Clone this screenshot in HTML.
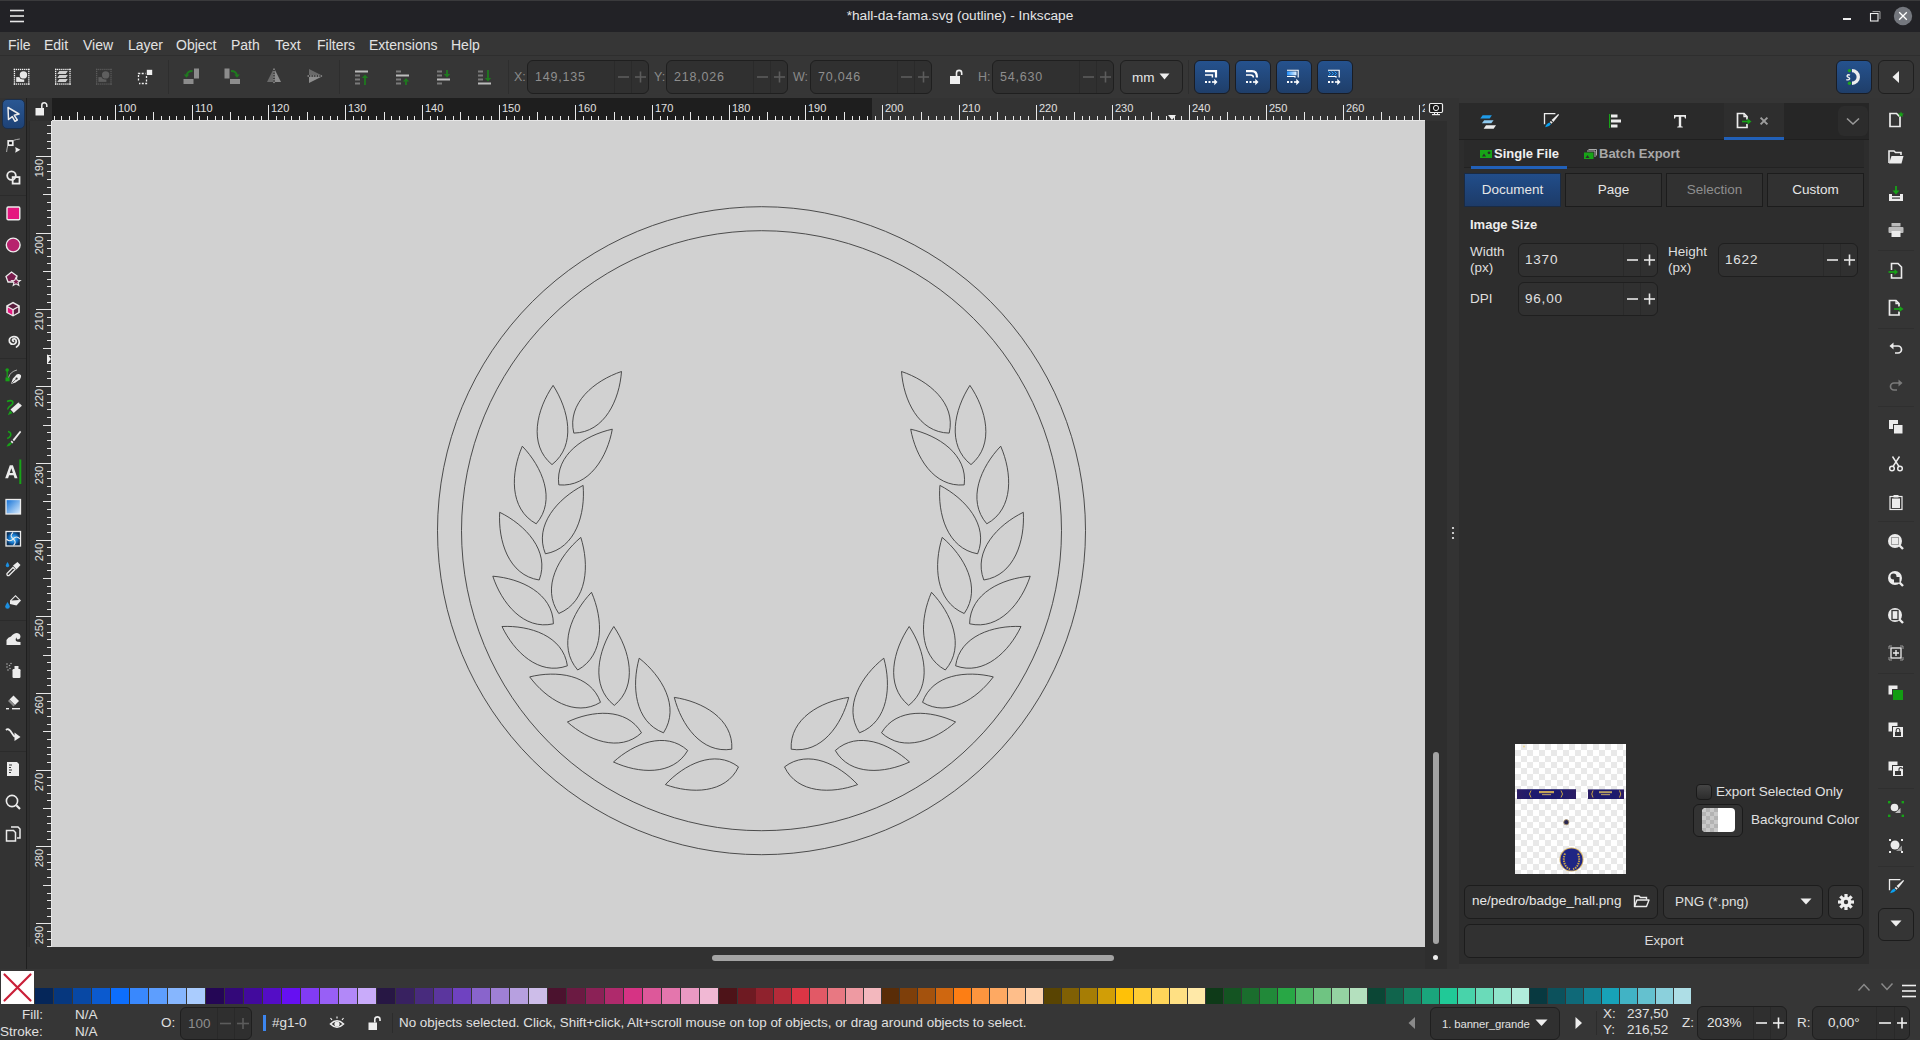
<!DOCTYPE html>
<html><head><meta charset="utf-8">
<style>
*{box-sizing:border-box;margin:0;padding:0}
html,body{width:1920px;height:1040px;overflow:hidden;background:#353535;font-family:"Liberation Sans",sans-serif;color:#dedede}
.a{position:absolute}
.t{white-space:nowrap}
svg{overflow:visible}
</style></head><body>
<div class="a" style="left:0;top:0;width:1920px;height:1px;background:#3a3a3c"></div>
<div class="a" style="left:0;top:1px;width:1920px;height:31px;background:#222226"></div>
<svg class="a" style="left:8px;top:8px" width="18" height="16"><g stroke="#e8e8e8" stroke-width="1.6"><line x1="2" y1="2.5" x2="16" y2="2.5"/><line x1="2" y1="8" x2="16" y2="8"/><line x1="2" y1="13.5" x2="16" y2="13.5"/></g></svg>
<div class="a t" style="left:760px;top:8px;width:400px;text-align:center;font-size:13.7px;color:#e6e6e6;line-height:16px">*hall-da-fama.svg (outline) - Inkscape</div>
<div class="a" style="left:1843px;top:18px;width:8px;height:1.5px;background:#eee"></div>
<svg class="a" style="left:1866px;top:8px" width="18" height="16"><rect x="4.5" y="5.5" width="7.5" height="7.5" fill="none" stroke="#eee" stroke-width="1.1"/><path d="M6.5 3.5 H14 V11" fill="none" stroke="#aaa" stroke-width="0.9"/></svg>
<svg class="a" style="left:1892px;top:5px" width="22" height="22"><circle cx="11" cy="11" r="9.2" fill="#74777e"/><path d="M7.2 7.2 L14.8 14.8 M14.8 7.2 L7.2 14.8" stroke="#fff" stroke-width="1.3"/></svg>
<div class="a" style="left:0;top:32px;width:1920px;height:23px;background:#363636"></div>
<div class="a t" style="left:8px;top:37px;font-size:14px;line-height:16px;color:#e2e2e2">File</div>
<div class="a t" style="left:44px;top:37px;font-size:14px;line-height:16px;color:#e2e2e2">Edit</div>
<div class="a t" style="left:83px;top:37px;font-size:14px;line-height:16px;color:#e2e2e2">View</div>
<div class="a t" style="left:128px;top:37px;font-size:14px;line-height:16px;color:#e2e2e2">Layer</div>
<div class="a t" style="left:176px;top:37px;font-size:14px;line-height:16px;color:#e2e2e2">Object</div>
<div class="a t" style="left:231px;top:37px;font-size:14px;line-height:16px;color:#e2e2e2">Path</div>
<div class="a t" style="left:275px;top:37px;font-size:14px;line-height:16px;color:#e2e2e2">Text</div>
<div class="a t" style="left:317px;top:37px;font-size:14px;line-height:16px;color:#e2e2e2">Filters</div>
<div class="a t" style="left:369px;top:37px;font-size:14px;line-height:16px;color:#e2e2e2">Extensions</div>
<div class="a t" style="left:451px;top:37px;font-size:14px;line-height:16px;color:#e2e2e2">Help</div>
<div class="a" style="left:0;top:55px;width:1920px;height:1px;background:#2e2e2e"></div>
<div class="a" style="left:0;top:56px;width:1920px;height:42px;background:#363636"></div>
<div class="a" style="left:168px;top:60px;width:1px;height:34px;background:#2e2e2e"></div>
<div class="a" style="left:339px;top:60px;width:1px;height:34px;background:#2e2e2e"></div>
<div class="a" style="left:508px;top:60px;width:1px;height:34px;background:#2e2e2e"></div>
<div class="a" style="left:1188px;top:60px;width:1px;height:34px;background:#2e2e2e"></div>
<svg class="a" style="left:0;top:0" width="170" height="95"><rect x="13.80" y="68.8" width="1.3" height="1.3" fill="#f2f2f2"/><rect x="13.80" y="83.39999999999999" width="1.3" height="1.3" fill="#f2f2f2"/><rect x="13.8" y="68.80" width="1.3" height="1.3" fill="#f2f2f2"/><rect x="28.15" y="68.80" width="1.3" height="1.3" fill="#f2f2f2"/><rect x="15.85" y="68.8" width="1.3" height="1.3" fill="#f2f2f2"/><rect x="15.85" y="83.39999999999999" width="1.3" height="1.3" fill="#f2f2f2"/><rect x="13.8" y="70.88" width="1.3" height="1.3" fill="#f2f2f2"/><rect x="28.15" y="70.88" width="1.3" height="1.3" fill="#f2f2f2"/><rect x="17.90" y="68.8" width="1.3" height="1.3" fill="#f2f2f2"/><rect x="17.90" y="83.39999999999999" width="1.3" height="1.3" fill="#f2f2f2"/><rect x="13.8" y="72.96" width="1.3" height="1.3" fill="#f2f2f2"/><rect x="28.15" y="72.96" width="1.3" height="1.3" fill="#f2f2f2"/><rect x="19.95" y="68.8" width="1.3" height="1.3" fill="#f2f2f2"/><rect x="19.95" y="83.39999999999999" width="1.3" height="1.3" fill="#f2f2f2"/><rect x="13.8" y="75.04" width="1.3" height="1.3" fill="#f2f2f2"/><rect x="28.15" y="75.04" width="1.3" height="1.3" fill="#f2f2f2"/><rect x="22.00" y="68.8" width="1.3" height="1.3" fill="#f2f2f2"/><rect x="22.00" y="83.39999999999999" width="1.3" height="1.3" fill="#f2f2f2"/><rect x="13.8" y="77.12" width="1.3" height="1.3" fill="#f2f2f2"/><rect x="28.15" y="77.12" width="1.3" height="1.3" fill="#f2f2f2"/><rect x="24.05" y="68.8" width="1.3" height="1.3" fill="#f2f2f2"/><rect x="24.05" y="83.39999999999999" width="1.3" height="1.3" fill="#f2f2f2"/><rect x="13.8" y="79.20" width="1.3" height="1.3" fill="#f2f2f2"/><rect x="28.15" y="79.20" width="1.3" height="1.3" fill="#f2f2f2"/><rect x="26.10" y="68.8" width="1.3" height="1.3" fill="#f2f2f2"/><rect x="26.10" y="83.39999999999999" width="1.3" height="1.3" fill="#f2f2f2"/><rect x="13.8" y="81.28" width="1.3" height="1.3" fill="#f2f2f2"/><rect x="28.15" y="81.28" width="1.3" height="1.3" fill="#f2f2f2"/><rect x="28.15" y="68.8" width="1.3" height="1.3" fill="#f2f2f2"/><rect x="28.15" y="83.39999999999999" width="1.3" height="1.3" fill="#f2f2f2"/><rect x="13.8" y="83.36" width="1.3" height="1.3" fill="#f2f2f2"/><rect x="28.15" y="83.36" width="1.3" height="1.3" fill="#f2f2f2"/><rect x="16.2" y="77.1" width="8" height="4.8" fill="#e8e8e8"/><circle cx="23.450000000000003" cy="74.9" r="4.7" fill="#363636"/><circle cx="23.450000000000003" cy="74.9" r="3.7" fill="#e8e8e8"/><rect x="55.00" y="68.8" width="1.3" height="1.3" fill="#f2f2f2"/><rect x="55.00" y="83.39999999999999" width="1.3" height="1.3" fill="#f2f2f2"/><rect x="55" y="68.80" width="1.3" height="1.3" fill="#f2f2f2"/><rect x="69.35" y="68.80" width="1.3" height="1.3" fill="#f2f2f2"/><rect x="57.05" y="68.8" width="1.3" height="1.3" fill="#f2f2f2"/><rect x="57.05" y="83.39999999999999" width="1.3" height="1.3" fill="#f2f2f2"/><rect x="55" y="70.88" width="1.3" height="1.3" fill="#f2f2f2"/><rect x="69.35" y="70.88" width="1.3" height="1.3" fill="#f2f2f2"/><rect x="59.10" y="68.8" width="1.3" height="1.3" fill="#f2f2f2"/><rect x="59.10" y="83.39999999999999" width="1.3" height="1.3" fill="#f2f2f2"/><rect x="55" y="72.96" width="1.3" height="1.3" fill="#f2f2f2"/><rect x="69.35" y="72.96" width="1.3" height="1.3" fill="#f2f2f2"/><rect x="61.15" y="68.8" width="1.3" height="1.3" fill="#f2f2f2"/><rect x="61.15" y="83.39999999999999" width="1.3" height="1.3" fill="#f2f2f2"/><rect x="55" y="75.04" width="1.3" height="1.3" fill="#f2f2f2"/><rect x="69.35" y="75.04" width="1.3" height="1.3" fill="#f2f2f2"/><rect x="63.20" y="68.8" width="1.3" height="1.3" fill="#f2f2f2"/><rect x="63.20" y="83.39999999999999" width="1.3" height="1.3" fill="#f2f2f2"/><rect x="55" y="77.12" width="1.3" height="1.3" fill="#f2f2f2"/><rect x="69.35" y="77.12" width="1.3" height="1.3" fill="#f2f2f2"/><rect x="65.25" y="68.8" width="1.3" height="1.3" fill="#f2f2f2"/><rect x="65.25" y="83.39999999999999" width="1.3" height="1.3" fill="#f2f2f2"/><rect x="55" y="79.20" width="1.3" height="1.3" fill="#f2f2f2"/><rect x="69.35" y="79.20" width="1.3" height="1.3" fill="#f2f2f2"/><rect x="67.30" y="68.8" width="1.3" height="1.3" fill="#f2f2f2"/><rect x="67.30" y="83.39999999999999" width="1.3" height="1.3" fill="#f2f2f2"/><rect x="55" y="81.28" width="1.3" height="1.3" fill="#f2f2f2"/><rect x="69.35" y="81.28" width="1.3" height="1.3" fill="#f2f2f2"/><rect x="69.35" y="68.8" width="1.3" height="1.3" fill="#f2f2f2"/><rect x="69.35" y="83.39999999999999" width="1.3" height="1.3" fill="#f2f2f2"/><rect x="55" y="83.36" width="1.3" height="1.3" fill="#f2f2f2"/><rect x="69.35" y="83.36" width="1.3" height="1.3" fill="#f2f2f2"/><path d="M59.3 71 H67.8 L65.8 73.9 H57.3Z M59.3 75 H67.8 L65.8 77.9 H57.3Z M59.3 78.9 H67.8 L65.8 82 H57.3Z" fill="#cfcfcf"/><rect x="96.00" y="68.8" width="1.3" height="1.3" fill="#5a5a5a"/><rect x="96.00" y="83.39999999999999" width="1.3" height="1.3" fill="#5a5a5a"/><rect x="96" y="68.80" width="1.3" height="1.3" fill="#5a5a5a"/><rect x="110.35" y="68.80" width="1.3" height="1.3" fill="#5a5a5a"/><rect x="98.05" y="68.8" width="1.3" height="1.3" fill="#5a5a5a"/><rect x="98.05" y="83.39999999999999" width="1.3" height="1.3" fill="#5a5a5a"/><rect x="96" y="70.88" width="1.3" height="1.3" fill="#5a5a5a"/><rect x="110.35" y="70.88" width="1.3" height="1.3" fill="#5a5a5a"/><rect x="100.10" y="68.8" width="1.3" height="1.3" fill="#5a5a5a"/><rect x="100.10" y="83.39999999999999" width="1.3" height="1.3" fill="#5a5a5a"/><rect x="96" y="72.96" width="1.3" height="1.3" fill="#5a5a5a"/><rect x="110.35" y="72.96" width="1.3" height="1.3" fill="#5a5a5a"/><rect x="102.15" y="68.8" width="1.3" height="1.3" fill="#5a5a5a"/><rect x="102.15" y="83.39999999999999" width="1.3" height="1.3" fill="#5a5a5a"/><rect x="96" y="75.04" width="1.3" height="1.3" fill="#5a5a5a"/><rect x="110.35" y="75.04" width="1.3" height="1.3" fill="#5a5a5a"/><rect x="104.20" y="68.8" width="1.3" height="1.3" fill="#5a5a5a"/><rect x="104.20" y="83.39999999999999" width="1.3" height="1.3" fill="#5a5a5a"/><rect x="96" y="77.12" width="1.3" height="1.3" fill="#5a5a5a"/><rect x="110.35" y="77.12" width="1.3" height="1.3" fill="#5a5a5a"/><rect x="106.25" y="68.8" width="1.3" height="1.3" fill="#5a5a5a"/><rect x="106.25" y="83.39999999999999" width="1.3" height="1.3" fill="#5a5a5a"/><rect x="96" y="79.20" width="1.3" height="1.3" fill="#5a5a5a"/><rect x="110.35" y="79.20" width="1.3" height="1.3" fill="#5a5a5a"/><rect x="108.30" y="68.8" width="1.3" height="1.3" fill="#5a5a5a"/><rect x="108.30" y="83.39999999999999" width="1.3" height="1.3" fill="#5a5a5a"/><rect x="96" y="81.28" width="1.3" height="1.3" fill="#5a5a5a"/><rect x="110.35" y="81.28" width="1.3" height="1.3" fill="#5a5a5a"/><rect x="110.35" y="68.8" width="1.3" height="1.3" fill="#5a5a5a"/><rect x="110.35" y="83.39999999999999" width="1.3" height="1.3" fill="#5a5a5a"/><rect x="96" y="83.36" width="1.3" height="1.3" fill="#5a5a5a"/><rect x="110.35" y="83.36" width="1.3" height="1.3" fill="#5a5a5a"/><rect x="98.4" y="77.1" width="8" height="4.8" fill="#5e5e5e"/><circle cx="105.65" cy="74.9" r="4.7" fill="#363636"/><circle cx="105.65" cy="74.9" r="3.7" fill="#5e5e5e"/><path d="M138.5 80.5 V73.5 H145.5 M146.5 76 V83.5 H139" fill="none" stroke="#f0f0f0" stroke-width="1.3" stroke-dasharray="2 1.4"/><rect x="146.8" y="69.8" width="5.4" height="5.2" fill="#f0f0f0"/></svg>
<svg class="a" style="left:183px;top:68px" width="18" height="17"><rect x="11" y="0.5" width="5" height="10" fill="#8c8c8c"/><rect x="0.5" y="11" width="10" height="5" fill="#8c8c8c"/><path d="M9.5 3 Q4 3 3.5 8" fill="none" stroke="#1e7a1e" stroke-width="1.8"/><path d="M0.8 6.5 L3.5 9.8 L6.3 6.5Z" fill="#1e7a1e"/></svg>
<svg class="a" style="left:224px;top:68px" width="18" height="17"><rect x="0.5" y="0.5" width="5" height="10" fill="#8c8c8c"/><rect x="6" y="11" width="10" height="5" fill="#8c8c8c"/><path d="M7 3 Q12.5 3 13 8" fill="none" stroke="#1e7a1e" stroke-width="1.8"/><path d="M10.2 6.5 L13 9.8 L15.8 6.5Z" fill="#1e7a1e"/></svg>
<svg class="a" style="left:266px;top:68px" width="17" height="17"><path d="M7 2 V14 H1Z" fill="#6a6a6a"/><path d="M9 2 V14 H15Z" fill="#8e8e8e"/><line x1="8" y1="0.5" x2="8" y2="16" stroke="#bdbdbd" stroke-width="1" stroke-dasharray="1.6 1"/></svg>
<svg class="a" style="left:307px;top:68px" width="17" height="17"><path d="M2 7 H14 L2 1Z" fill="#6a6a6a"/><path d="M2 9 H14 L2 15Z" fill="#8e8e8e"/><line x1="0.5" y1="8" x2="16" y2="8" stroke="#bdbdbd" stroke-width="1" stroke-dasharray="1.6 1"/></svg>
<svg class="a" style="left:355px;top:70px" width="14" height="16"><rect x="0" y="0.5" width="13" height="2" fill="#bcbcbc"/><rect x="0" y="4.5" width="5" height="2" fill="#7a7a7a"/><rect x="0" y="8.5" width="5" height="2" fill="#7a7a7a"/><rect x="0" y="12.5" width="5" height="2" fill="#7a7a7a"/><path d="M10 15 V6" stroke="#1e7a1e" stroke-width="1.8"/><path d="M6.8 8 L10 4.5 L13.2 8Z" fill="#1e7a1e"/></svg>
<svg class="a" style="left:396px;top:70px" width="14" height="16"><rect x="0" y="0.5" width="5" height="2" fill="#7a7a7a"/><rect x="0" y="4.5" width="13" height="2" fill="#bcbcbc"/><rect x="0" y="8.5" width="5" height="2" fill="#7a7a7a"/><rect x="0" y="12.5" width="5" height="2" fill="#7a7a7a"/><path d="M10 15 V10" stroke="#1e7a1e" stroke-width="1.8"/><path d="M6.8 11.5 L10 8 L13.2 11.5Z" fill="#1e7a1e"/></svg>
<svg class="a" style="left:437px;top:70px" width="14" height="16"><rect x="0" y="0.5" width="5" height="2" fill="#7a7a7a"/><rect x="0" y="4.5" width="5" height="2" fill="#7a7a7a"/><rect x="0" y="8.5" width="13" height="2" fill="#bcbcbc"/><rect x="0" y="12.5" width="5" height="2" fill="#7a7a7a"/><path d="M10 0 V5" stroke="#1e7a1e" stroke-width="1.8"/><path d="M6.8 4 L10 7.5 L13.2 4Z" fill="#1e7a1e"/></svg>
<svg class="a" style="left:478px;top:70px" width="14" height="16"><rect x="0" y="0.5" width="5" height="2" fill="#7a7a7a"/><rect x="0" y="4.5" width="5" height="2" fill="#7a7a7a"/><rect x="0" y="8.5" width="5" height="2" fill="#7a7a7a"/><rect x="0" y="12.5" width="13" height="2" fill="#bcbcbc"/><path d="M10 0 V9" stroke="#1e7a1e" stroke-width="1.8"/><path d="M6.8 8 L10 11.5 L13.2 8Z" fill="#1e7a1e"/></svg>
<div class="a t" style="left:514px;top:69px;font-size:12.5px;line-height:16px;color:#8a8a8a">X:</div>
<div class="a" style="left:527px;top:60px;width:122px;height:34px;border:1px solid #1f1f1f;border-radius:6px;background:#303030"></div>
<div class="a" style="left:614px;top:61px;width:1px;height:32px;background:#2a2a2a"></div>
<div class="a" style="left:631px;top:61px;width:1px;height:32px;background:#2a2a2a"></div>
<div class="a t" style="left:535px;top:69.0px;font-size:12.5px;line-height:16px;color:#8e8e8e;letter-spacing:0.8px">149,135</div>
<svg class="a" style="left:614px;top:60px" width="35" height="34"><g stroke="#5c5c5c" stroke-width="1.6"><line x1="4" y1="17.0" x2="15" y2="17.0"/><line x1="21" y1="17.0" x2="32" y2="17.0"/><line x1="26.5" y1="11.5" x2="26.5" y2="22.5"/></g></svg>
<div class="a t" style="left:654px;top:69px;font-size:12.5px;line-height:16px;color:#8a8a8a">Y:</div>
<div class="a" style="left:666px;top:60px;width:122px;height:34px;border:1px solid #1f1f1f;border-radius:6px;background:#303030"></div>
<div class="a" style="left:753px;top:61px;width:1px;height:32px;background:#2a2a2a"></div>
<div class="a" style="left:770px;top:61px;width:1px;height:32px;background:#2a2a2a"></div>
<div class="a t" style="left:674px;top:69.0px;font-size:12.5px;line-height:16px;color:#8e8e8e;letter-spacing:0.8px">218,026</div>
<svg class="a" style="left:753px;top:60px" width="35" height="34"><g stroke="#5c5c5c" stroke-width="1.6"><line x1="4" y1="17.0" x2="15" y2="17.0"/><line x1="21" y1="17.0" x2="32" y2="17.0"/><line x1="26.5" y1="11.5" x2="26.5" y2="22.5"/></g></svg>
<div class="a t" style="left:793px;top:69px;font-size:12.5px;line-height:16px;color:#8a8a8a">W:</div>
<div class="a" style="left:810px;top:60px;width:122px;height:34px;border:1px solid #1f1f1f;border-radius:6px;background:#303030"></div>
<div class="a" style="left:897px;top:61px;width:1px;height:32px;background:#2a2a2a"></div>
<div class="a" style="left:914px;top:61px;width:1px;height:32px;background:#2a2a2a"></div>
<div class="a t" style="left:818px;top:69.0px;font-size:12.5px;line-height:16px;color:#8e8e8e;letter-spacing:0.8px">70,046</div>
<svg class="a" style="left:897px;top:60px" width="35" height="34"><g stroke="#5c5c5c" stroke-width="1.6"><line x1="4" y1="17.0" x2="15" y2="17.0"/><line x1="21" y1="17.0" x2="32" y2="17.0"/><line x1="26.5" y1="11.5" x2="26.5" y2="22.5"/></g></svg>
<div class="a t" style="left:978px;top:69px;font-size:12.5px;line-height:16px;color:#8a8a8a">H:</div>
<div class="a" style="left:992px;top:60px;width:122px;height:34px;border:1px solid #1f1f1f;border-radius:6px;background:#303030"></div>
<div class="a" style="left:1079px;top:61px;width:1px;height:32px;background:#2a2a2a"></div>
<div class="a" style="left:1096px;top:61px;width:1px;height:32px;background:#2a2a2a"></div>
<div class="a t" style="left:1000px;top:69.0px;font-size:12.5px;line-height:16px;color:#8e8e8e;letter-spacing:0.8px">54,630</div>
<svg class="a" style="left:1079px;top:60px" width="35" height="34"><g stroke="#5c5c5c" stroke-width="1.6"><line x1="4" y1="17.0" x2="15" y2="17.0"/><line x1="21" y1="17.0" x2="32" y2="17.0"/><line x1="26.5" y1="11.5" x2="26.5" y2="22.5"/></g></svg>
<svg class="a" style="left:948px;top:68px" width="16" height="17"><path d="M2 8 H12 V16 H2Z" fill="#eee"/><path d="M8.5 8 V5 A2.6 2.6 0 0 1 13.7 5 V7" fill="none" stroke="#eee" stroke-width="1.6"/></svg>
<div class="a" style="left:1120px;top:60px;width:63px;height:34px;border:1px solid #1f1f1f;border-radius:6px;background:#353535"></div>
<div class="a t" style="left:1132px;top:69.5px;font-size:13.5px;line-height:16px;color:#e6e6e6">mm</div>
<svg class="a" style="left:1159px;top:73px" width="12" height="8"><path d="M0.5 0.5 H10.5 L5.5 6.5Z" fill="#eee"/></svg>
<div class="a" style="left:1194px;top:60px;width:36px;height:34px;border:1px solid #1a1d24;border-radius:6px;background:linear-gradient(#25528e,#1f3e69)"></div>
<svg class="a" style="left:1204px;top:69px" width="16" height="16"><path d="M1 2.2 H12 V8.5" fill="none" stroke="#fff" stroke-width="2.2"/><path d="M1 6 H8.4 V8.5" fill="none" stroke="#fff" stroke-width="1.5"/><rect x="1" y="12" width="2" height="2" fill="#fff"/><rect x="4.5" y="12" width="2" height="2" fill="#fff"/><rect x="8" y="12.2" width="3" height="1.6" fill="#fff"/><path d="M10.3 9.8 L13.5 13 L10.3 16.2Z" fill="#fff"/></svg>
<div class="a" style="left:1235px;top:60px;width:36px;height:34px;border:1px solid #1a1d24;border-radius:6px;background:linear-gradient(#25528e,#1f3e69)"></div>
<svg class="a" style="left:1245px;top:69px" width="16" height="16"><path d="M1 2.2 H7 Q12 2.2 12 8.5" fill="none" stroke="#fff" stroke-width="2.2"/><path d="M1 6 H5.5 Q8.4 6 8.4 8.5" fill="none" stroke="#fff" stroke-width="1.5"/><rect x="1" y="12" width="2" height="2" fill="#fff"/><rect x="4.5" y="12" width="2" height="2" fill="#fff"/><rect x="8" y="12.2" width="3" height="1.6" fill="#fff"/><path d="M10.3 9.8 L13.5 13 L10.3 16.2Z" fill="#fff"/></svg>
<div class="a" style="left:1276px;top:60px;width:36px;height:34px;border:1px solid #1a1d24;border-radius:6px;background:linear-gradient(#25528e,#1f3e69)"></div>
<svg class="a" style="left:1286px;top:69px" width="16" height="16"><defs><linearGradient id="bg3"><stop offset="0" stop-color="#1e90ff"/><stop offset="1" stop-color="#e8f4ff"/></linearGradient></defs><rect x="1" y="2.5" width="9.5" height="3.8" fill="url(#bg3)"/><path d="M1 1.2 H12.2 V8.5" fill="none" stroke="#fff" stroke-width="1.1"/><path d="M1 7.5 H9 V8.8" fill="none" stroke="#fff" stroke-width="1.1"/><rect x="1" y="12" width="2" height="2" fill="#fff"/><rect x="4.5" y="12" width="2" height="2" fill="#fff"/><rect x="8" y="12.2" width="3" height="1.6" fill="#fff"/><path d="M10.3 9.8 L13.5 13 L10.3 16.2Z" fill="#fff"/></svg>
<div class="a" style="left:1317px;top:60px;width:36px;height:34px;border:1px solid #1a1d24;border-radius:6px;background:linear-gradient(#25528e,#1f3e69)"></div>
<svg class="a" style="left:1327px;top:69px" width="16" height="16"><path d="M1.5 2.5 L3.5 4.5 L1.5 6.5 M4.5 2.5 L6.5 4.5 L4.5 6.5 M7.5 2.5 L9.5 4.5 L7.5 6.5" fill="none" stroke="#22a0ff" stroke-width="1"/><path d="M1 1.2 H12.2 V8.5" fill="none" stroke="#fff" stroke-width="1.1"/><path d="M1 7.5 H9 V8.8" fill="none" stroke="#fff" stroke-width="1.1"/><rect x="1" y="12" width="2" height="2" fill="#fff"/><rect x="4.5" y="12" width="2" height="2" fill="#fff"/><rect x="8" y="12.2" width="3" height="1.6" fill="#fff"/><path d="M10.3 9.8 L13.5 13 L10.3 16.2Z" fill="#fff"/></svg>
<div class="a" style="left:1836px;top:60px;width:36px;height:34px;border:1px solid #1a1d24;border-radius:6px;background:linear-gradient(#25528e,#1f3e69)"></div>
<svg class="a" style="left:1845px;top:68px" width="18" height="18"><path d="M7 2.6 A6.3 6.3 0 1 1 7 15.2" fill="none" stroke="#eee" stroke-width="3.4"/><circle cx="4.5" cy="2.6" r="1.7" fill="#1fa31f"/><circle cx="4.5" cy="15.3" r="1.7" fill="#1fa31f"/><path d="M5 7.2 Q3 6.2 2.2 7.6 Q1.8 8.8 3.4 9.3 Q5 9.8 4.5 11.2 Q3.6 12.4 1.3 11.6" fill="none" stroke="#eee" stroke-width="1.4"/></svg>
<div class="a" style="left:1878px;top:60px;width:36px;height:34px;border:1px solid #1f1f1f;border-radius:6px;background:#363636"></div>
<svg class="a" style="left:1891px;top:70px" width="10" height="14"><path d="M8 1 V13 L1.5 7Z" fill="#eee"/></svg>
<div class="a" style="left:52px;top:121px;width:1373px;height:826px;background:#d1d1d1;overflow:hidden">
<div class="a" style="left:-52px;top:-121px;width:1920px;height:1040px"><svg class="a" style="left:0;top:0" width="1920" height="1040"><g fill="none" stroke="#3c3c3c" stroke-width="0.9"><circle cx="761.5" cy="530.7" r="324"/><circle cx="761.5" cy="530.7" r="300"/><path d="M573.80 433.10 C604.82 432.49 619.51 399.52 621.50 371.50 C594.87 380.44 566.63 402.91 573.80 433.10Z"/><path d="M949.20 433.10 C956.37 402.91 928.13 380.44 901.50 371.50 C903.49 399.52 918.18 432.49 949.20 433.10Z"/><path d="M552.00 464.60 C576.83 445.14 568.61 409.38 553.10 385.40 C536.93 408.94 527.72 444.46 552.00 464.60Z"/><path d="M971.00 464.60 C995.28 444.46 986.07 408.94 969.90 385.40 C954.39 409.38 946.17 445.14 971.00 464.60Z"/><path d="M558.80 484.90 C589.44 487.56 607.39 456.61 612.30 429.20 C585.11 435.21 554.91 454.39 558.80 484.90Z"/><path d="M964.20 484.90 C968.09 454.39 937.89 435.21 910.70 429.20 C915.61 456.61 933.56 487.56 964.20 484.90Z"/><path d="M536.20 523.80 C556.78 500.09 541.99 466.70 522.30 446.20 C510.95 472.26 508.67 508.71 536.20 523.80Z"/><path d="M986.80 523.80 C1014.33 508.71 1012.05 472.26 1000.70 446.20 C981.01 466.70 966.22 500.09 986.80 523.80Z"/><path d="M539.20 580.00 C550.31 550.83 525.09 524.71 499.70 512.30 C498.01 540.51 508.34 575.32 539.20 580.00Z"/><path d="M983.80 580.00 C1014.66 575.32 1024.99 540.51 1023.30 512.30 C997.91 524.71 972.69 550.83 983.80 580.00Z"/><path d="M545.40 553.80 C576.03 548.39 585.47 513.46 583.10 485.40 C558.11 498.38 533.62 525.01 545.40 553.80Z"/><path d="M977.60 553.80 C989.38 525.01 964.89 498.38 939.90 485.40 C937.53 513.46 946.97 548.39 977.60 553.80Z"/><path d="M558.80 613.50 C587.89 601.30 589.42 564.63 580.80 537.40 C558.98 555.83 540.71 587.65 558.80 613.50Z"/><path d="M964.20 613.50 C982.29 587.65 964.02 555.83 942.20 537.40 C933.58 564.63 935.11 601.30 964.20 613.50Z"/><path d="M553.40 623.80 C553.01 593.11 520.50 578.36 492.80 576.20 C501.46 602.60 523.49 630.69 553.40 623.80Z"/><path d="M969.60 623.80 C999.51 630.69 1021.54 602.60 1030.20 576.20 C1002.50 578.36 969.99 593.11 969.60 623.80Z"/><path d="M577.70 670.00 C605.24 654.85 602.90 618.37 591.50 592.30 C571.82 612.85 557.06 646.30 577.70 670.00Z"/><path d="M945.30 670.00 C965.94 646.30 951.18 612.85 931.50 592.30 C920.10 618.37 917.76 654.85 945.30 670.00Z"/><path d="M567.40 665.80 C563.23 635.70 529.48 625.21 502.00 626.50 C513.76 651.37 538.87 676.25 567.40 665.80Z"/><path d="M955.60 665.80 C984.13 676.25 1009.24 651.37 1021.00 626.50 C993.52 625.21 959.77 635.70 955.60 665.80Z"/><path d="M614.30 705.40 C638.63 685.52 629.73 650.07 613.80 626.50 C598.17 650.27 589.72 685.83 614.30 705.40Z"/><path d="M908.70 705.40 C933.28 685.83 924.83 650.27 909.20 626.50 C893.27 650.07 884.37 685.52 908.70 705.40Z"/><path d="M600.50 702.30 C590.67 674.00 556.02 670.36 529.70 676.90 C545.86 698.68 574.93 717.90 600.50 702.30Z"/><path d="M922.50 702.30 C948.07 717.90 977.14 698.68 993.30 676.90 C966.98 670.36 932.33 674.00 922.50 702.30Z"/><path d="M641.50 732.80 C626.32 707.13 591.79 710.42 567.40 722.00 C587.47 740.06 619.63 753.07 641.50 732.80Z"/><path d="M881.50 732.80 C903.37 753.07 935.53 740.06 955.60 722.00 C931.21 710.42 896.68 707.13 881.50 732.80Z"/><path d="M663.50 732.80 C680.55 706.62 661.41 675.72 639.20 658.20 C631.57 685.44 634.30 721.68 663.50 732.80Z"/><path d="M859.50 732.80 C888.70 721.68 891.43 685.44 883.80 658.20 C861.59 675.72 842.45 706.62 859.50 732.80Z"/><path d="M687.70 750.50 C665.59 730.37 633.46 743.71 613.50 762.00 C638.06 773.39 672.72 776.38 687.70 750.50Z"/><path d="M835.30 750.50 C850.28 776.38 884.94 773.39 909.50 762.00 C889.54 743.71 857.41 730.37 835.30 750.50Z"/><path d="M731.80 749.20 C733.48 718.42 701.91 701.44 674.30 697.40 C681.19 724.44 701.37 754.08 731.80 749.20Z"/><path d="M791.20 749.20 C821.63 754.08 841.81 724.44 848.70 697.40 C821.09 701.44 789.52 718.42 791.20 749.20Z"/><path d="M738.50 766.90 C714.74 748.66 683.79 764.67 665.40 784.60 C690.87 793.91 725.71 793.99 738.50 766.90Z"/><path d="M784.50 766.90 C797.29 793.99 832.13 793.91 857.60 784.60 C839.21 764.67 808.26 748.66 784.50 766.90Z"/></g></svg></div>
</div>
<div class="a" style="left:0;top:98px;width:27px;height:871px;background:#333333"></div>
<div class="a" style="left:26px;top:98px;width:1px;height:871px;background:#1f1f1f"></div>
<div class="a" style="left:27px;top:98px;width:25px;height:23px;background:#2f2f2f"></div>
<div class="a" style="left:52px;top:98px;width:820px;height:22px;background:#1e1e1e"></div>
<div class="a" style="left:872px;top:98px;width:553px;height:22px;background:#333333"></div>
<div class="a" style="left:52px;top:120px;width:1373px;height:1px;background:#e6e6e6"></div>
<div class="a" style="left:27px;top:121px;width:24px;height:826px;background:#333333"></div>
<div class="a" style="left:27px;top:121px;width:2px;height:826px;background:#2e2e2e"></div>
<div class="a" style="left:29px;top:121px;width:1px;height:826px;background:#2a2a2a"></div>
<div class="a" style="left:51px;top:121px;width:1px;height:826px;background:#e6e6e6"></div>
<svg class="a" style="left:52px;top:98px" width="1373" height="23"><g stroke="#e8e8e8" stroke-width="1" shape-rendering="crispEdges"><line x1="2.5" y1="18" x2="2.5" y2="22"/><line x1="9.5" y1="18" x2="9.5" y2="22"/><line x1="17.5" y1="18" x2="17.5" y2="22"/><line x1="25.5" y1="14" x2="25.5" y2="22"/><line x1="32.5" y1="18" x2="32.5" y2="22"/><line x1="40.5" y1="18" x2="40.5" y2="22"/><line x1="48.5" y1="18" x2="48.5" y2="22"/><line x1="55.5" y1="18" x2="55.5" y2="22"/><line x1="63.5" y1="7" x2="63.5" y2="22"/><line x1="71.5" y1="18" x2="71.5" y2="22"/><line x1="78.5" y1="18" x2="78.5" y2="22"/><line x1="86.5" y1="18" x2="86.5" y2="22"/><line x1="94.5" y1="18" x2="94.5" y2="22"/><line x1="101.5" y1="14" x2="101.5" y2="22"/><line x1="109.5" y1="18" x2="109.5" y2="22"/><line x1="117.5" y1="18" x2="117.5" y2="22"/><line x1="124.5" y1="18" x2="124.5" y2="22"/><line x1="132.5" y1="18" x2="132.5" y2="22"/><line x1="140.5" y1="7" x2="140.5" y2="22"/><line x1="147.5" y1="18" x2="147.5" y2="22"/><line x1="155.5" y1="18" x2="155.5" y2="22"/><line x1="163.5" y1="18" x2="163.5" y2="22"/><line x1="170.5" y1="18" x2="170.5" y2="22"/><line x1="178.5" y1="14" x2="178.5" y2="22"/><line x1="186.5" y1="18" x2="186.5" y2="22"/><line x1="193.5" y1="18" x2="193.5" y2="22"/><line x1="201.5" y1="18" x2="201.5" y2="22"/><line x1="209.5" y1="18" x2="209.5" y2="22"/><line x1="216.5" y1="7" x2="216.5" y2="22"/><line x1="224.5" y1="18" x2="224.5" y2="22"/><line x1="232.5" y1="18" x2="232.5" y2="22"/><line x1="239.5" y1="18" x2="239.5" y2="22"/><line x1="247.5" y1="18" x2="247.5" y2="22"/><line x1="255.5" y1="14" x2="255.5" y2="22"/><line x1="262.5" y1="18" x2="262.5" y2="22"/><line x1="270.5" y1="18" x2="270.5" y2="22"/><line x1="278.5" y1="18" x2="278.5" y2="22"/><line x1="285.5" y1="18" x2="285.5" y2="22"/><line x1="293.5" y1="7" x2="293.5" y2="22"/><line x1="301.5" y1="18" x2="301.5" y2="22"/><line x1="309.5" y1="18" x2="309.5" y2="22"/><line x1="316.5" y1="18" x2="316.5" y2="22"/><line x1="324.5" y1="18" x2="324.5" y2="22"/><line x1="332.5" y1="14" x2="332.5" y2="22"/><line x1="339.5" y1="18" x2="339.5" y2="22"/><line x1="347.5" y1="18" x2="347.5" y2="22"/><line x1="355.5" y1="18" x2="355.5" y2="22"/><line x1="362.5" y1="18" x2="362.5" y2="22"/><line x1="370.5" y1="7" x2="370.5" y2="22"/><line x1="378.5" y1="18" x2="378.5" y2="22"/><line x1="385.5" y1="18" x2="385.5" y2="22"/><line x1="393.5" y1="18" x2="393.5" y2="22"/><line x1="401.5" y1="18" x2="401.5" y2="22"/><line x1="408.5" y1="14" x2="408.5" y2="22"/><line x1="416.5" y1="18" x2="416.5" y2="22"/><line x1="424.5" y1="18" x2="424.5" y2="22"/><line x1="431.5" y1="18" x2="431.5" y2="22"/><line x1="439.5" y1="18" x2="439.5" y2="22"/><line x1="447.5" y1="7" x2="447.5" y2="22"/><line x1="454.5" y1="18" x2="454.5" y2="22"/><line x1="462.5" y1="18" x2="462.5" y2="22"/><line x1="470.5" y1="18" x2="470.5" y2="22"/><line x1="477.5" y1="18" x2="477.5" y2="22"/><line x1="485.5" y1="14" x2="485.5" y2="22"/><line x1="493.5" y1="18" x2="493.5" y2="22"/><line x1="500.5" y1="18" x2="500.5" y2="22"/><line x1="508.5" y1="18" x2="508.5" y2="22"/><line x1="516.5" y1="18" x2="516.5" y2="22"/><line x1="523.5" y1="7" x2="523.5" y2="22"/><line x1="531.5" y1="18" x2="531.5" y2="22"/><line x1="539.5" y1="18" x2="539.5" y2="22"/><line x1="546.5" y1="18" x2="546.5" y2="22"/><line x1="554.5" y1="18" x2="554.5" y2="22"/><line x1="562.5" y1="14" x2="562.5" y2="22"/><line x1="569.5" y1="18" x2="569.5" y2="22"/><line x1="577.5" y1="18" x2="577.5" y2="22"/><line x1="585.5" y1="18" x2="585.5" y2="22"/><line x1="592.5" y1="18" x2="592.5" y2="22"/><line x1="600.5" y1="7" x2="600.5" y2="22"/><line x1="608.5" y1="18" x2="608.5" y2="22"/><line x1="615.5" y1="18" x2="615.5" y2="22"/><line x1="623.5" y1="18" x2="623.5" y2="22"/><line x1="631.5" y1="18" x2="631.5" y2="22"/><line x1="638.5" y1="14" x2="638.5" y2="22"/><line x1="646.5" y1="18" x2="646.5" y2="22"/><line x1="654.5" y1="18" x2="654.5" y2="22"/><line x1="661.5" y1="18" x2="661.5" y2="22"/><line x1="669.5" y1="18" x2="669.5" y2="22"/><line x1="677.5" y1="7" x2="677.5" y2="22"/><line x1="684.5" y1="18" x2="684.5" y2="22"/><line x1="692.5" y1="18" x2="692.5" y2="22"/><line x1="700.5" y1="18" x2="700.5" y2="22"/><line x1="707.5" y1="18" x2="707.5" y2="22"/><line x1="715.5" y1="14" x2="715.5" y2="22"/><line x1="723.5" y1="18" x2="723.5" y2="22"/><line x1="730.5" y1="18" x2="730.5" y2="22"/><line x1="738.5" y1="18" x2="738.5" y2="22"/><line x1="746.5" y1="18" x2="746.5" y2="22"/><line x1="753.5" y1="7" x2="753.5" y2="22"/><line x1="761.5" y1="18" x2="761.5" y2="22"/><line x1="769.5" y1="18" x2="769.5" y2="22"/><line x1="776.5" y1="18" x2="776.5" y2="22"/><line x1="784.5" y1="18" x2="784.5" y2="22"/><line x1="792.5" y1="14" x2="792.5" y2="22"/><line x1="800.5" y1="18" x2="800.5" y2="22"/><line x1="807.5" y1="18" x2="807.5" y2="22"/><line x1="815.5" y1="18" x2="815.5" y2="22"/><line x1="823.5" y1="18" x2="823.5" y2="22"/><line x1="830.5" y1="7" x2="830.5" y2="22"/><line x1="838.5" y1="18" x2="838.5" y2="22"/><line x1="846.5" y1="18" x2="846.5" y2="22"/><line x1="853.5" y1="18" x2="853.5" y2="22"/><line x1="861.5" y1="18" x2="861.5" y2="22"/><line x1="869.5" y1="14" x2="869.5" y2="22"/><line x1="876.5" y1="18" x2="876.5" y2="22"/><line x1="884.5" y1="18" x2="884.5" y2="22"/><line x1="892.5" y1="18" x2="892.5" y2="22"/><line x1="899.5" y1="18" x2="899.5" y2="22"/><line x1="907.5" y1="7" x2="907.5" y2="22"/><line x1="915.5" y1="18" x2="915.5" y2="22"/><line x1="922.5" y1="18" x2="922.5" y2="22"/><line x1="930.5" y1="18" x2="930.5" y2="22"/><line x1="938.5" y1="18" x2="938.5" y2="22"/><line x1="945.5" y1="14" x2="945.5" y2="22"/><line x1="953.5" y1="18" x2="953.5" y2="22"/><line x1="961.5" y1="18" x2="961.5" y2="22"/><line x1="968.5" y1="18" x2="968.5" y2="22"/><line x1="976.5" y1="18" x2="976.5" y2="22"/><line x1="984.5" y1="7" x2="984.5" y2="22"/><line x1="991.5" y1="18" x2="991.5" y2="22"/><line x1="999.5" y1="18" x2="999.5" y2="22"/><line x1="1007.5" y1="18" x2="1007.5" y2="22"/><line x1="1014.5" y1="18" x2="1014.5" y2="22"/><line x1="1022.5" y1="14" x2="1022.5" y2="22"/><line x1="1030.5" y1="18" x2="1030.5" y2="22"/><line x1="1037.5" y1="18" x2="1037.5" y2="22"/><line x1="1045.5" y1="18" x2="1045.5" y2="22"/><line x1="1053.5" y1="18" x2="1053.5" y2="22"/><line x1="1060.5" y1="7" x2="1060.5" y2="22"/><line x1="1068.5" y1="18" x2="1068.5" y2="22"/><line x1="1076.5" y1="18" x2="1076.5" y2="22"/><line x1="1083.5" y1="18" x2="1083.5" y2="22"/><line x1="1091.5" y1="18" x2="1091.5" y2="22"/><line x1="1099.5" y1="14" x2="1099.5" y2="22"/><line x1="1106.5" y1="18" x2="1106.5" y2="22"/><line x1="1114.5" y1="18" x2="1114.5" y2="22"/><line x1="1122.5" y1="18" x2="1122.5" y2="22"/><line x1="1129.5" y1="18" x2="1129.5" y2="22"/><line x1="1137.5" y1="7" x2="1137.5" y2="22"/><line x1="1145.5" y1="18" x2="1145.5" y2="22"/><line x1="1152.5" y1="18" x2="1152.5" y2="22"/><line x1="1160.5" y1="18" x2="1160.5" y2="22"/><line x1="1168.5" y1="18" x2="1168.5" y2="22"/><line x1="1175.5" y1="14" x2="1175.5" y2="22"/><line x1="1183.5" y1="18" x2="1183.5" y2="22"/><line x1="1191.5" y1="18" x2="1191.5" y2="22"/><line x1="1198.5" y1="18" x2="1198.5" y2="22"/><line x1="1206.5" y1="18" x2="1206.5" y2="22"/><line x1="1214.5" y1="7" x2="1214.5" y2="22"/><line x1="1221.5" y1="18" x2="1221.5" y2="22"/><line x1="1229.5" y1="18" x2="1229.5" y2="22"/><line x1="1237.5" y1="18" x2="1237.5" y2="22"/><line x1="1244.5" y1="18" x2="1244.5" y2="22"/><line x1="1252.5" y1="14" x2="1252.5" y2="22"/><line x1="1260.5" y1="18" x2="1260.5" y2="22"/><line x1="1268.5" y1="18" x2="1268.5" y2="22"/><line x1="1275.5" y1="18" x2="1275.5" y2="22"/><line x1="1283.5" y1="18" x2="1283.5" y2="22"/><line x1="1291.5" y1="7" x2="1291.5" y2="22"/><line x1="1298.5" y1="18" x2="1298.5" y2="22"/><line x1="1306.5" y1="18" x2="1306.5" y2="22"/><line x1="1314.5" y1="18" x2="1314.5" y2="22"/><line x1="1321.5" y1="18" x2="1321.5" y2="22"/><line x1="1329.5" y1="14" x2="1329.5" y2="22"/><line x1="1337.5" y1="18" x2="1337.5" y2="22"/><line x1="1344.5" y1="18" x2="1344.5" y2="22"/><line x1="1352.5" y1="18" x2="1352.5" y2="22"/><line x1="1360.5" y1="18" x2="1360.5" y2="22"/><line x1="1367.5" y1="7" x2="1367.5" y2="22"/></g><g fill="#e0e0e0" font-size="11" font-family="Liberation Sans"><text x="66.0" y="14.2">100</text><text x="143.0" y="14.2">110</text><text x="219.0" y="14.2">120</text><text x="296.0" y="14.2">130</text><text x="373.0" y="14.2">140</text><text x="450.0" y="14.2">150</text><text x="526.0" y="14.2">160</text><text x="603.0" y="14.2">170</text><text x="680.0" y="14.2">180</text><text x="756.0" y="14.2">190</text><text x="833.0" y="14.2">200</text><text x="910.0" y="14.2">210</text><text x="987.0" y="14.2">220</text><text x="1063.0" y="14.2">230</text><text x="1140.0" y="14.2">240</text><text x="1217.0" y="14.2">250</text><text x="1294.0" y="14.2">260</text><text x="1370.0" y="14.2">270</text></g><path d="M1116 17 H1124 L1120 22Z" fill="#eee"/></svg>
<svg class="a" style="left:27px;top:121px" width="24" height="826"><g stroke="#e8e8e8" stroke-width="1" shape-rendering="crispEdges"><line x1="20" y1="4.5" x2="24" y2="4.5"/><line x1="20" y1="12.5" x2="24" y2="12.5"/><line x1="20" y1="20.5" x2="24" y2="20.5"/><line x1="20" y1="27.5" x2="24" y2="27.5"/><line x1="9" y1="35.5" x2="24" y2="35.5"/><line x1="20" y1="43.5" x2="24" y2="43.5"/><line x1="20" y1="50.5" x2="24" y2="50.5"/><line x1="20" y1="58.5" x2="24" y2="58.5"/><line x1="20" y1="66.5" x2="24" y2="66.5"/><line x1="16" y1="73.5" x2="24" y2="73.5"/><line x1="20" y1="81.5" x2="24" y2="81.5"/><line x1="20" y1="89.5" x2="24" y2="89.5"/><line x1="20" y1="96.5" x2="24" y2="96.5"/><line x1="20" y1="104.5" x2="24" y2="104.5"/><line x1="9" y1="112.5" x2="24" y2="112.5"/><line x1="20" y1="119.5" x2="24" y2="119.5"/><line x1="20" y1="127.5" x2="24" y2="127.5"/><line x1="20" y1="135.5" x2="24" y2="135.5"/><line x1="20" y1="142.5" x2="24" y2="142.5"/><line x1="16" y1="150.5" x2="24" y2="150.5"/><line x1="20" y1="158.5" x2="24" y2="158.5"/><line x1="20" y1="165.5" x2="24" y2="165.5"/><line x1="20" y1="173.5" x2="24" y2="173.5"/><line x1="20" y1="181.5" x2="24" y2="181.5"/><line x1="9" y1="188.5" x2="24" y2="188.5"/><line x1="20" y1="196.5" x2="24" y2="196.5"/><line x1="20" y1="204.5" x2="24" y2="204.5"/><line x1="20" y1="211.5" x2="24" y2="211.5"/><line x1="20" y1="219.5" x2="24" y2="219.5"/><line x1="16" y1="227.5" x2="24" y2="227.5"/><line x1="20" y1="234.5" x2="24" y2="234.5"/><line x1="20" y1="242.5" x2="24" y2="242.5"/><line x1="20" y1="250.5" x2="24" y2="250.5"/><line x1="20" y1="257.5" x2="24" y2="257.5"/><line x1="9" y1="265.5" x2="24" y2="265.5"/><line x1="20" y1="273.5" x2="24" y2="273.5"/><line x1="20" y1="281.5" x2="24" y2="281.5"/><line x1="20" y1="288.5" x2="24" y2="288.5"/><line x1="20" y1="296.5" x2="24" y2="296.5"/><line x1="16" y1="304.5" x2="24" y2="304.5"/><line x1="20" y1="311.5" x2="24" y2="311.5"/><line x1="20" y1="319.5" x2="24" y2="319.5"/><line x1="20" y1="327.5" x2="24" y2="327.5"/><line x1="20" y1="334.5" x2="24" y2="334.5"/><line x1="9" y1="342.5" x2="24" y2="342.5"/><line x1="20" y1="350.5" x2="24" y2="350.5"/><line x1="20" y1="357.5" x2="24" y2="357.5"/><line x1="20" y1="365.5" x2="24" y2="365.5"/><line x1="20" y1="373.5" x2="24" y2="373.5"/><line x1="16" y1="380.5" x2="24" y2="380.5"/><line x1="20" y1="388.5" x2="24" y2="388.5"/><line x1="20" y1="396.5" x2="24" y2="396.5"/><line x1="20" y1="403.5" x2="24" y2="403.5"/><line x1="20" y1="411.5" x2="24" y2="411.5"/><line x1="9" y1="419.5" x2="24" y2="419.5"/><line x1="20" y1="426.5" x2="24" y2="426.5"/><line x1="20" y1="434.5" x2="24" y2="434.5"/><line x1="20" y1="442.5" x2="24" y2="442.5"/><line x1="20" y1="449.5" x2="24" y2="449.5"/><line x1="16" y1="457.5" x2="24" y2="457.5"/><line x1="20" y1="465.5" x2="24" y2="465.5"/><line x1="20" y1="472.5" x2="24" y2="472.5"/><line x1="20" y1="480.5" x2="24" y2="480.5"/><line x1="20" y1="488.5" x2="24" y2="488.5"/><line x1="9" y1="495.5" x2="24" y2="495.5"/><line x1="20" y1="503.5" x2="24" y2="503.5"/><line x1="20" y1="511.5" x2="24" y2="511.5"/><line x1="20" y1="518.5" x2="24" y2="518.5"/><line x1="20" y1="526.5" x2="24" y2="526.5"/><line x1="16" y1="534.5" x2="24" y2="534.5"/><line x1="20" y1="541.5" x2="24" y2="541.5"/><line x1="20" y1="549.5" x2="24" y2="549.5"/><line x1="20" y1="557.5" x2="24" y2="557.5"/><line x1="20" y1="564.5" x2="24" y2="564.5"/><line x1="9" y1="572.5" x2="24" y2="572.5"/><line x1="20" y1="580.5" x2="24" y2="580.5"/><line x1="20" y1="587.5" x2="24" y2="587.5"/><line x1="20" y1="595.5" x2="24" y2="595.5"/><line x1="20" y1="603.5" x2="24" y2="603.5"/><line x1="16" y1="610.5" x2="24" y2="610.5"/><line x1="20" y1="618.5" x2="24" y2="618.5"/><line x1="20" y1="626.5" x2="24" y2="626.5"/><line x1="20" y1="633.5" x2="24" y2="633.5"/><line x1="20" y1="641.5" x2="24" y2="641.5"/><line x1="9" y1="649.5" x2="24" y2="649.5"/><line x1="20" y1="656.5" x2="24" y2="656.5"/><line x1="20" y1="664.5" x2="24" y2="664.5"/><line x1="20" y1="672.5" x2="24" y2="672.5"/><line x1="20" y1="679.5" x2="24" y2="679.5"/><line x1="16" y1="687.5" x2="24" y2="687.5"/><line x1="20" y1="695.5" x2="24" y2="695.5"/><line x1="20" y1="702.5" x2="24" y2="702.5"/><line x1="20" y1="710.5" x2="24" y2="710.5"/><line x1="20" y1="718.5" x2="24" y2="718.5"/><line x1="9" y1="725.5" x2="24" y2="725.5"/><line x1="20" y1="733.5" x2="24" y2="733.5"/><line x1="20" y1="741.5" x2="24" y2="741.5"/><line x1="20" y1="748.5" x2="24" y2="748.5"/><line x1="20" y1="756.5" x2="24" y2="756.5"/><line x1="16" y1="764.5" x2="24" y2="764.5"/><line x1="20" y1="772.5" x2="24" y2="772.5"/><line x1="20" y1="779.5" x2="24" y2="779.5"/><line x1="20" y1="787.5" x2="24" y2="787.5"/><line x1="20" y1="795.5" x2="24" y2="795.5"/><line x1="9" y1="802.5" x2="24" y2="802.5"/><line x1="20" y1="810.5" x2="24" y2="810.5"/><line x1="20" y1="818.5" x2="24" y2="818.5"/><line x1="20" y1="825.5" x2="24" y2="825.5"/></g><g fill="#e0e0e0" font-size="11" font-family="Liberation Sans"><text transform="translate(16.3 38.0) rotate(-90)" text-anchor="end">190</text><text transform="translate(16.3 115.0) rotate(-90)" text-anchor="end">200</text><text transform="translate(16.3 191.0) rotate(-90)" text-anchor="end">210</text><text transform="translate(16.3 268.0) rotate(-90)" text-anchor="end">220</text><text transform="translate(16.3 345.0) rotate(-90)" text-anchor="end">230</text><text transform="translate(16.3 422.0) rotate(-90)" text-anchor="end">240</text><text transform="translate(16.3 498.0) rotate(-90)" text-anchor="end">250</text><text transform="translate(16.3 575.0) rotate(-90)" text-anchor="end">260</text><text transform="translate(16.3 652.0) rotate(-90)" text-anchor="end">270</text><text transform="translate(16.3 728.0) rotate(-90)" text-anchor="end">280</text><text transform="translate(16.3 805.0) rotate(-90)" text-anchor="end">290</text></g><path d="M20 233 V243 L24 238Z" fill="#eee"/></svg>
<svg class="a" style="left:34px;top:101px" width="16" height="16"><path d="M1.5 7 H10 V14.5 H1.5Z" fill="#eee"/><path d="M7.8 7 V4.2 A2.5 2.5 0 0 1 12.8 4.2 V6" fill="none" stroke="#eee" stroke-width="1.5"/></svg>
<div class="a" style="left:1425px;top:98px;width:22px;height:23px;background:#333333"></div>
<svg class="a" style="left:1428px;top:102px" width="16" height="15"><rect x="1.5" y="1.5" width="13" height="9" rx="1.2" fill="#1a1a1a" stroke="#eee" stroke-width="1.2"/><circle cx="8" cy="6" r="2.6" fill="none" stroke="#eee" stroke-width="1"/><path d="M6.5 10.5 V12 M9.5 10.5 V12" stroke="#eee"/><rect x="4" y="12" width="8" height="1.2" fill="#eee"/></svg>
<div class="a" style="left:1425px;top:121px;width:22px;height:848px;background:#2e2e2e"></div>
<div class="a" style="left:27px;top:947px;width:1398px;height:22px;background:#313131"></div>
<div class="a" style="left:1433px;top:752px;width:6px;height:192px;border-radius:3px;background:#a4a4a4"></div>
<div class="a" style="left:712px;top:955px;width:402px;height:6px;border-radius:3px;background:#a4a4a4"></div>
<div class="a" style="left:1433px;top:955px;width:5px;height:5px;border-radius:3px;background:#eee"></div>
<div class="a" style="left:0;top:195px;width:26px;height:1px;background:#2b2b2b"></div>
<div class="a" style="left:0;top:358px;width:26px;height:1px;background:#2b2b2b"></div>
<div class="a" style="left:0;top:620px;width:26px;height:1px;background:#2b2b2b"></div>
<div class="a" style="left:0;top:751px;width:26px;height:1px;background:#2b2b2b"></div>
<div class="a" style="left:2px;top:99px;width:22.5px;height:30px;border-radius:5px;background:linear-gradient(#2a5793,#1e4276);border:1px solid #1b2f4c"></div>
<svg class="a" style="left:3.5px;top:105.0px" width="18" height="18" viewBox="0 0 18 18"><path d="M4 2.5 L15 9 L10.3 10.3 L13.3 15 L11 16.3 L8.3 11.6 L4.5 14.5Z" fill="#1f3f6e" stroke="#ececec" stroke-width="1.5" stroke-linejoin="round"/></svg>
<svg class="a" style="left:3.5px;top:137.0px" width="18" height="18" viewBox="0 0 18 18"><rect x="4.2" y="3.9" width="4.6" height="4.3" fill="none" stroke="#ececec" stroke-width="1.7"/><circle cx="6.5" cy="6.05" r="0.9" fill="#111"/><path d="M9.5 3.4 Q12 2.4 15.8 2" fill="none" stroke="#bbb" stroke-width="0.9"/><path d="M3.6 9 Q2.9 11.8 2.6 15" fill="none" stroke="#bbb" stroke-width="0.9"/><path d="M11.2 10 L16.4 12.8 L11.2 15.8 Q12.2 12.8 11.2 10Z" fill="#ececec"/></svg>
<svg class="a" style="left:3.5px;top:167.0px" width="18" height="18" viewBox="0 0 18 18"><circle cx="7.5" cy="8.6" r="4.3" fill="none" stroke="#ececec" stroke-width="1.8"/><rect x="8.65" y="10.1" width="6.85" height="6.5" fill="none" stroke="#ececec" stroke-width="1.8"/></svg>
<svg class="a" style="left:3.5px;top:204.0px" width="18" height="18" viewBox="0 0 18 18"><rect x="3" y="3" width="12.8" height="12.8" rx="1.2" fill="#e5177f" stroke="#ececec" stroke-width="1.4"/></svg>
<svg class="a" style="left:3.5px;top:236.0px" width="18" height="18" viewBox="0 0 18 18"><circle cx="9.2" cy="9" r="6.9" fill="#b7226e" stroke="#ececec" stroke-width="1.4"/></svg>
<svg class="a" style="left:3.5px;top:268.5px" width="18" height="18" viewBox="0 0 18 18"><path d="M2 7.5 L7.5 3 L13 7 L11.5 13 L4 13Z" fill="#7a1d4e" stroke="#ececec" stroke-width="1.3"/><path d="M12 8.5 L13.3 11.3 L16.3 11.5 L14 13.4 L14.8 16.4 L12 14.8 L9.2 16.4 L10 13.4 L7.7 11.5 L10.7 11.3Z" fill="#7a1d4e" stroke="#ececec" stroke-width="1.1"/></svg>
<svg class="a" style="left:3.5px;top:299.5px" width="18" height="18" viewBox="0 0 18 18"><path d="M9 1.8 L15.8 5.5 V12.8 L9 16.5 L2.2 12.8 V5.5Z" fill="#ececec"/><path d="M9 3.5 L14 6.2 L9 8.9 L4 6.2Z" fill="#5a1f3e"/><path d="M3.8 7.4 L8.3 9.9 V14.8 L3.8 12.3Z" fill="#e5177f"/><path d="M9.8 9.9 L14.2 7.4 V12.3 L9.8 14.8Z" fill="#5a1f3e"/></svg>
<svg class="a" style="left:3.5px;top:332.0px" width="18" height="18" viewBox="0 0 18 18"><path d="M9.5 9.3 Q8 8.5 8.8 7.3 Q10.5 6 12 8 Q13 10.5 10.5 12 Q7 13 5.5 10 Q4.5 6 8.5 4.8 Q13.5 4 15 8.5 Q16 13 12.5 15" fill="none" stroke="#ececec" stroke-width="1.7" stroke-linecap="round"/></svg>
<svg class="a" style="left:3.5px;top:366.5px" width="18" height="18" viewBox="0 0 18 18"><circle cx="3.2" cy="3" r="1.8" fill="#17a317"/><rect x="1.5" y="10.4" width="4.1" height="3.9" fill="#17a317"/><path d="M3.2 3 V10.5" stroke="#17a317" stroke-width="1.2"/><path d="M4.6 10.5 Q6 4.8 13 3" fill="none" stroke="#bbb" stroke-width="0.9"/><path d="M7 17 L8.8 11.8 L12.6 7.4 Q15 6.4 17 8.2 Q17.6 10.4 16 12.2 L11.6 15.6Z" fill="#ececec"/><circle cx="12.6" cy="11.6" r="1.1" fill="#333"/><path d="M7.6 16.4 L12.2 12" stroke="#333" stroke-width="0.7"/></svg>
<svg class="a" style="left:3.5px;top:396.0px" width="18" height="18" viewBox="0 0 18 18"><path d="M3 5.5 Q6.5 3.8 8.6 5.4 Q9.8 7.6 6.6 9.6 Q3.6 11.6 3.6 13.6" fill="none" stroke="#17a317" stroke-width="1.5"/><rect x="-5.5" y="-2.4" width="11" height="4.8" transform="translate(12.2 11.6) rotate(-42)" fill="#ececec"/><path d="M14.6 6.6 L15.6 7.7" stroke="#333" stroke-width="0.8"/><path d="M3.8 19.2 L6 14.6 L8.6 17.1Z" fill="#17a317"/></svg>
<svg class="a" style="left:3.5px;top:429.0px" width="18" height="18" viewBox="0 0 18 18"><path d="M4 2.6 Q7.6 3.6 6.6 6.6 Q5.2 9 3.2 9.6" fill="none" stroke="#17a317" stroke-width="1.6"/><path d="M16 1.8 L17.2 3 L10 12.2 L8.6 10.8Z" fill="#ececec"/><path d="M7.8 11.6 L9.4 13.2 L8.2 14.4 L6.6 12.8Z" fill="#ececec"/><path d="M6.3 13.3 Q3.5 14.5 2.5 17.5 Q6.5 17 8 14.5Z" fill="#17a317"/></svg>
<svg class="a" style="left:3.5px;top:462.0px" width="18" height="18" viewBox="0 0 18 18"><path d="M1.2 16.2 L5.8 3.2 H8.9 L13.5 16.2 H10.6 L9.6 13.2 H5.1 L4.1 16.2Z M5.8 11 H8.9 L7.35 6.2Z" fill="#ececec"/><rect x="15.3" y="-2.5" width="2" height="24.5" fill="#17a317"/></svg>
<svg class="a" style="left:3.5px;top:497.5px" width="18" height="18" viewBox="0 0 18 18"><defs><linearGradient id="gg" x1="0" y1="0" x2="1" y2="1"><stop offset="0" stop-color="#0f6fd6"/><stop offset="1" stop-color="#dff0ff"/></linearGradient></defs><rect x="2" y="1.5" width="14.5" height="14.5" fill="url(#gg)" stroke="#ececec" stroke-width="1.3"/></svg>
<svg class="a" style="left:3.5px;top:530.0px" width="18" height="18" viewBox="0 0 18 18"><defs><radialGradient id="mg"><stop offset="0" stop-color="#6ad0ff"/><stop offset="0.6" stop-color="#1272c8"/><stop offset="1" stop-color="#0b2f55"/></radialGradient></defs><rect x="2" y="1.5" width="14.5" height="14.5" fill="url(#mg)" stroke="#ececec" stroke-width="1.3"/><path d="M9.2 8.8 Q5 6 9 2.5 M9.2 8.8 Q12.5 5 16 9 M9.2 8.8 Q13 12 9.5 15.5 M9.2 8.8 Q6 12.5 2.5 9" fill="none" stroke="#ececec" stroke-width="1.1"/></svg>
<svg class="a" style="left:3.5px;top:560.0px" width="18" height="18" viewBox="0 0 18 18"><path d="M3.5 2 Q1.8 4.5 1.8 5.5 A1.7 1.7 0 0 0 5.2 5.5 Q5.2 4.5 3.5 2Z" fill="#1c8fe0"/><path d="M5 15.5 L11 9.5 L9 7.5 L3 13.5 Q2.5 16 5 15.5Z" fill="none" stroke="#ececec" stroke-width="1.3"/><path d="M9 5.5 L13.5 2 L16.5 5 L12.5 9.5Z" fill="#ececec"/></svg>
<svg class="a" style="left:3.5px;top:592.5px" width="18" height="18" viewBox="0 0 18 18"><path d="M3.5 9 Q1.2 12.5 1.2 13.5 A2.3 2.3 0 0 0 5.8 13.5 Q5.8 12.5 3.5 9Z" fill="#1c8fe0"/><path d="M6 7.5 L11.5 2 L17 7.5 L12.5 12.5 L6 11Z" fill="#ececec"/><path d="M7.5 7.5 L11.5 3.5 L15 7Z" fill="#333"/></svg>
<svg class="a" style="left:3.5px;top:629.0px" width="18" height="18" viewBox="0 0 18 18"><path d="M2.5 16 V11 Q4 8 7 7.5 Q9.5 4 13 4 Q16.5 4.5 16.5 8 Q16 10.5 13.5 10.5 Q12 10 13 8.5 Q11 9 12 12 Q13 13 16.5 13 V16Z" fill="#ececec"/></svg>
<svg class="a" style="left:3.5px;top:661.0px" width="18" height="18" viewBox="0 0 18 18"><rect x="8.5" y="8" width="8" height="9" rx="1.2" fill="#ececec"/><rect x="10.5" y="5" width="4" height="3" fill="#ececec"/><g fill="#aaa"><circle cx="3" cy="3" r="0.8"/><circle cx="5.5" cy="4.5" r="0.8"/><circle cx="3" cy="6" r="0.8"/><circle cx="6" cy="7.5" r="0.8"/><circle cx="4" cy="9" r="0.8"/><circle cx="7" cy="2.5" r="0.8"/></g></svg>
<svg class="a" style="left:3.5px;top:693.5px" width="18" height="18" viewBox="0 0 18 18"><path d="M9.5 1.5 L15 7 L11 11 L5.5 5.5Z" fill="#ececec"/><path d="M5.5 5.5 L11 11 L9.5 12.5 L4 7Z" fill="#8a8a8a"/><rect x="2" y="14" width="3" height="1.4" fill="#ececec"/><rect x="8" y="14" width="8" height="1.4" fill="#ececec"/></svg>
<svg class="a" style="left:3.5px;top:725.0px" width="18" height="18" viewBox="0 0 18 18"><path d="M2 5 Q4 3 6.5 6 L9.5 10.5 Q11 12 12 11" fill="none" stroke="#ececec" stroke-width="1.8"/><path d="M10.5 7.5 L16.5 12 L10.5 16Z" fill="#ececec"/></svg>
<svg class="a" style="left:3.5px;top:760.0px" width="18" height="18" viewBox="0 0 18 18"><path d="M3 2 H13 L15 4 V16 H3Z" fill="#ececec"/><path d="M5 5 H8 M5 7.5 H7 M5 10 H8 M5 12.5 H7" stroke="#333" stroke-width="1"/></svg>
<svg class="a" style="left:3.5px;top:792.5px" width="18" height="18" viewBox="0 0 18 18"><circle cx="8" cy="8" r="5.6" fill="none" stroke="#ececec" stroke-width="1.6"/><path d="M12.3 12.3 L16 16" stroke="#ececec" stroke-width="2.2"/></svg>
<svg class="a" style="left:3.5px;top:823.5px" width="18" height="18" viewBox="0 0 18 18"><path d="M7 3 H14 L16 5 V14 H13" fill="none" stroke="#ececec" stroke-width="1.5"/><path d="M2.5 6.5 H9.5 L11.5 8.5 V17 H2.5Z" fill="none" stroke="#ececec" stroke-width="1.5"/></svg>
<div class="a" style="left:1447px;top:98px;width:12px;height:871px;background:#333333"></div>
<div class="a" style="left:1459px;top:98px;width:410px;height:5px;background:#353535"></div>
<div class="a" style="left:1459px;top:103px;width:410px;height:861px;background:#2d2d2d"></div>
<div class="a" style="left:1459px;top:964px;width:410px;height:5px;background:#353535"></div>
<svg class="a" style="left:1450px;top:526px" width="6" height="14"><g fill="#eee"><circle cx="3" cy="2" r="1.1"/><circle cx="3" cy="7" r="1.1"/><circle cx="3" cy="12" r="1.1"/></g></svg>
<div class="a" style="left:1459px;top:103px;width:265px;height:37px;background:#2a2a2a"></div>
<div class="a" style="left:1724px;top:103px;width:60px;height:37px;background:#2e2e2e"></div>
<div class="a" style="left:1784px;top:103px;width:85px;height:37px;background:#262626"></div>
<div class="a" style="left:1459px;top:139px;width:410px;height:1px;background:#1f1f1f"></div>
<div class="a" style="left:1724px;top:137px;width:60px;height:3px;background:#2160b8"></div>
<div class="a" style="left:1838px;top:106px;width:30px;height:30px;border-radius:6px;background:#2c2c2c"></div>
<svg class="a" style="left:1844.0px;top:111.5px" width="18" height="18" viewBox="0 0 18 18"><path d="M3 6.5 L9 12 L15 6.5" fill="none" stroke="#9a9a9a" stroke-width="1.6"/></svg>
<svg class="a" style="left:1479.0px;top:113.5px" width="18" height="16" viewBox="0 0 18 16"><path d="M3.6 1.3 H12.9 L10.7 4.4 H1.3Z" fill="#1f9be8"/><path d="M5.2 6.3 H14.6 L12.3 9.3 H2.9Z" fill="#8fcbf0"/><path d="M7 11.3 H17 L14.6 14.8 H4.6Z" fill="#ececec"/></svg>
<svg class="a" style="left:1541.8px;top:110.8px" width="18" height="18" viewBox="0 0 18 18"><path d="M2.5 13.2 V2.6 H13.4" fill="none" stroke="#eee" stroke-width="1.3"/><path d="M16.2 2.9 L17.1 3.8 L11.4 10.9 L9.6 9.1Z" fill="#eee"/><path d="M8.9 9.9 L10.7 11.6 L9.4 12.8 L7.7 11.1Z" fill="#eee"/><path d="M7.4 11.6 Q4.2 12.6 3.2 16.3 Q7.2 16 8.9 13.2Z" fill="#0aa0f0"/></svg>
<svg class="a" style="left:1606.5px;top:111.5px" width="18" height="18" viewBox="0 0 18 18"><rect x="2" y="2" width="1.2" height="14" fill="#17a317"/><rect x="4" y="2.5" width="6.5" height="3" fill="#ececec"/><rect x="4" y="7.5" width="10" height="3" fill="#ececec"/><rect x="4" y="12.5" width="6.5" height="3" fill="#ececec"/></svg>
<svg class="a" style="left:1671.0px;top:112.0px" width="18" height="18" viewBox="0 0 18 18"><path d="M3 3 H15 V6.5 H14 L13.3 4.7 H10.2 V14.3 L11.8 14.8 V15.5 H6.2 V14.8 L7.8 14.3 V4.7 H4.7 L4 6.5 H3Z" fill="#ececec"/></svg>
<svg class="a" style="left:1735.0px;top:111.5px" width="18" height="18" viewBox="0 0 18 18"><path d="M12 7.5 V4.5 L9 1.5 H2.5 V15.5 H12 V12" fill="none" stroke="#ececec" stroke-width="1.7"/><path d="M9 1.5 V4.5 H12" fill="none" stroke="#ececec" stroke-width="1.3"/><path d="M7 9.5 H13" stroke="#17a317" stroke-width="1.6"/><path d="M12.5 6.5 L16.5 9.5 L12.5 12.5Z" fill="#17a317"/></svg>
<svg class="a" style="left:1758.0px;top:115.0px" width="12" height="12" viewBox="0 0 12 12"><path d="M2.6 2.6 L9.4 9.4 M9.4 2.6 L2.6 9.4" stroke="#9d9d9d" stroke-width="2"/></svg>
<div class="a" style="left:1464px;top:140px;width:400px;height:28px;background:#2a2a2a"></div>
<div class="a" style="left:1464px;top:167px;width:400px;height:1px;background:#222"></div>
<div class="a" style="left:1471px;top:166px;width:96px;height:3px;background:#2160b8"></div>
<svg class="a" style="left:1480.0px;top:150.0px" width="12" height="8" viewBox="0 0 12 8"><rect x="0" y="0" width="12" height="8" fill="#17a317"/><path d="M2 6.5 L4 3.5 L6 6.5Z" fill="#2a2a2a"/><circle cx="9" cy="2.8" r="1.4" fill="#2a2a2a"/></svg>
<div class="a t" style="left:1494px;top:146px;font-size:13px;line-height:16px;color:#f0f0f0;font-weight:bold;">Single File</div>
<svg class="a" style="left:1583.5px;top:149.0px" width="13" height="10" viewBox="0 0 13 10"><path d="M4.5 0.5 H12.5 V6.5 M3 2 H11 V8" fill="none" stroke="#bbb" stroke-width="0.9"/><rect x="0" y="3.5" width="9.5" height="6.5" fill="#17a317"/><path d="M1.5 9 L3.5 6 L5.5 9Z" fill="#2a2a2a"/></svg>
<div class="a t" style="left:1599px;top:146px;font-size:13px;line-height:16px;color:#a8a8a8;font-weight:bold;">Batch Export</div>
<div class="a" style="left:1464px;top:173px;width:97px;height:34px;border:1px solid #1a2b44;background:linear-gradient(#214d8a,#1d3b68)"></div>
<div class="a t" style="left:1464px;top:182px;font-size:13.5px;line-height:16px;color:#e6e6e6;width:97px;text-align:center">Document</div>
<div class="a" style="left:1565px;top:173px;width:97px;height:34px;border:1px solid #1c1c1c;background:#313131"></div>
<div class="a t" style="left:1565px;top:182px;font-size:13.5px;line-height:16px;color:#e6e6e6;width:97px;text-align:center">Page</div>
<div class="a" style="left:1666px;top:173px;width:97px;height:34px;border:1px solid #1c1c1c;background:#313131"></div>
<div class="a t" style="left:1666px;top:182px;font-size:13.5px;line-height:16px;color:#8e8e8e;width:97px;text-align:center">Selection</div>
<div class="a" style="left:1767px;top:173px;width:97px;height:34px;border:1px solid #1c1c1c;background:#313131"></div>
<div class="a t" style="left:1767px;top:182px;font-size:13.5px;line-height:16px;color:#e6e6e6;width:97px;text-align:center">Custom</div>
<div class="a t" style="left:1470px;top:217px;font-size:13px;line-height:16px;color:#ececec;font-weight:bold;">Image Size</div>
<div class="a t" style="left:1470px;top:244px;font-size:13.5px;line-height:16px;color:#dedede;">Width</div>
<div class="a t" style="left:1470px;top:260px;font-size:13.5px;line-height:16px;color:#dedede;">(px)</div>
<div class="a t" style="left:1668px;top:244px;font-size:13.5px;line-height:16px;color:#dedede;">Height</div>
<div class="a t" style="left:1668px;top:260px;font-size:13.5px;line-height:16px;color:#dedede;">(px)</div>
<div class="a t" style="left:1470px;top:291px;font-size:13.5px;line-height:16px;color:#dedede;">DPI</div>
<div class="a" style="left:1518px;top:243px;width:140px;height:34px;border:1px solid #1f1f1f;border-radius:6px;background:#303030"></div>
<div class="a" style="left:1623px;top:244px;width:1px;height:32px;background:#2a2a2a"></div>
<div class="a" style="left:1640px;top:244px;width:1px;height:32px;background:#2a2a2a"></div>
<div class="a t" style="left:1525px;top:252.0px;font-size:13.5px;line-height:16px;color:#e0e0e0;letter-spacing:0.8px">1370</div>
<svg class="a" style="left:1623px;top:243px" width="35" height="34"><g stroke="#e8e8e8" stroke-width="1.6"><line x1="4" y1="17.0" x2="15" y2="17.0"/><line x1="21" y1="17.0" x2="32" y2="17.0"/><line x1="26.5" y1="11.5" x2="26.5" y2="22.5"/></g></svg>
<div class="a" style="left:1718px;top:243px;width:140px;height:34px;border:1px solid #1f1f1f;border-radius:6px;background:#303030"></div>
<div class="a" style="left:1823px;top:244px;width:1px;height:32px;background:#2a2a2a"></div>
<div class="a" style="left:1840px;top:244px;width:1px;height:32px;background:#2a2a2a"></div>
<div class="a t" style="left:1725px;top:252.0px;font-size:13.5px;line-height:16px;color:#e0e0e0;letter-spacing:0.8px">1622</div>
<svg class="a" style="left:1823px;top:243px" width="35" height="34"><g stroke="#e8e8e8" stroke-width="1.6"><line x1="4" y1="17.0" x2="15" y2="17.0"/><line x1="21" y1="17.0" x2="32" y2="17.0"/><line x1="26.5" y1="11.5" x2="26.5" y2="22.5"/></g></svg>
<div class="a" style="left:1518px;top:282px;width:140px;height:34px;border:1px solid #1f1f1f;border-radius:6px;background:#303030"></div>
<div class="a" style="left:1623px;top:283px;width:1px;height:32px;background:#2a2a2a"></div>
<div class="a" style="left:1640px;top:283px;width:1px;height:32px;background:#2a2a2a"></div>
<div class="a t" style="left:1525px;top:291.0px;font-size:13.5px;line-height:16px;color:#e0e0e0;letter-spacing:0.8px">96,00</div>
<svg class="a" style="left:1623px;top:282px" width="35" height="34"><g stroke="#e8e8e8" stroke-width="1.6"><line x1="4" y1="17.0" x2="15" y2="17.0"/><line x1="21" y1="17.0" x2="32" y2="17.0"/><line x1="26.5" y1="11.5" x2="26.5" y2="22.5"/></g></svg>
<svg class="a" style="left:1515px;top:744px" width="111" height="130" viewBox="0 0 111 130"><defs><clipPath id="pc"><rect width="111" height="130"/></clipPath></defs><g clip-path="url(#pc)"><rect x="0" y="0" width="6" height="6" fill="#ffffff"/><rect x="0" y="6" width="6" height="6" fill="#e9e9e9"/><rect x="0" y="12" width="6" height="6" fill="#ffffff"/><rect x="0" y="18" width="6" height="6" fill="#e9e9e9"/><rect x="0" y="24" width="6" height="6" fill="#ffffff"/><rect x="0" y="30" width="6" height="6" fill="#e9e9e9"/><rect x="0" y="36" width="6" height="6" fill="#ffffff"/><rect x="0" y="42" width="6" height="6" fill="#e9e9e9"/><rect x="0" y="48" width="6" height="6" fill="#ffffff"/><rect x="0" y="54" width="6" height="6" fill="#e9e9e9"/><rect x="0" y="60" width="6" height="6" fill="#ffffff"/><rect x="0" y="66" width="6" height="6" fill="#e9e9e9"/><rect x="0" y="72" width="6" height="6" fill="#ffffff"/><rect x="0" y="78" width="6" height="6" fill="#e9e9e9"/><rect x="0" y="84" width="6" height="6" fill="#ffffff"/><rect x="0" y="90" width="6" height="6" fill="#e9e9e9"/><rect x="0" y="96" width="6" height="6" fill="#ffffff"/><rect x="0" y="102" width="6" height="6" fill="#e9e9e9"/><rect x="0" y="108" width="6" height="6" fill="#ffffff"/><rect x="0" y="114" width="6" height="6" fill="#e9e9e9"/><rect x="0" y="120" width="6" height="6" fill="#ffffff"/><rect x="0" y="126" width="6" height="6" fill="#e9e9e9"/><rect x="6" y="0" width="6" height="6" fill="#e9e9e9"/><rect x="6" y="6" width="6" height="6" fill="#ffffff"/><rect x="6" y="12" width="6" height="6" fill="#e9e9e9"/><rect x="6" y="18" width="6" height="6" fill="#ffffff"/><rect x="6" y="24" width="6" height="6" fill="#e9e9e9"/><rect x="6" y="30" width="6" height="6" fill="#ffffff"/><rect x="6" y="36" width="6" height="6" fill="#e9e9e9"/><rect x="6" y="42" width="6" height="6" fill="#ffffff"/><rect x="6" y="48" width="6" height="6" fill="#e9e9e9"/><rect x="6" y="54" width="6" height="6" fill="#ffffff"/><rect x="6" y="60" width="6" height="6" fill="#e9e9e9"/><rect x="6" y="66" width="6" height="6" fill="#ffffff"/><rect x="6" y="72" width="6" height="6" fill="#e9e9e9"/><rect x="6" y="78" width="6" height="6" fill="#ffffff"/><rect x="6" y="84" width="6" height="6" fill="#e9e9e9"/><rect x="6" y="90" width="6" height="6" fill="#ffffff"/><rect x="6" y="96" width="6" height="6" fill="#e9e9e9"/><rect x="6" y="102" width="6" height="6" fill="#ffffff"/><rect x="6" y="108" width="6" height="6" fill="#e9e9e9"/><rect x="6" y="114" width="6" height="6" fill="#ffffff"/><rect x="6" y="120" width="6" height="6" fill="#e9e9e9"/><rect x="6" y="126" width="6" height="6" fill="#ffffff"/><rect x="12" y="0" width="6" height="6" fill="#ffffff"/><rect x="12" y="6" width="6" height="6" fill="#e9e9e9"/><rect x="12" y="12" width="6" height="6" fill="#ffffff"/><rect x="12" y="18" width="6" height="6" fill="#e9e9e9"/><rect x="12" y="24" width="6" height="6" fill="#ffffff"/><rect x="12" y="30" width="6" height="6" fill="#e9e9e9"/><rect x="12" y="36" width="6" height="6" fill="#ffffff"/><rect x="12" y="42" width="6" height="6" fill="#e9e9e9"/><rect x="12" y="48" width="6" height="6" fill="#ffffff"/><rect x="12" y="54" width="6" height="6" fill="#e9e9e9"/><rect x="12" y="60" width="6" height="6" fill="#ffffff"/><rect x="12" y="66" width="6" height="6" fill="#e9e9e9"/><rect x="12" y="72" width="6" height="6" fill="#ffffff"/><rect x="12" y="78" width="6" height="6" fill="#e9e9e9"/><rect x="12" y="84" width="6" height="6" fill="#ffffff"/><rect x="12" y="90" width="6" height="6" fill="#e9e9e9"/><rect x="12" y="96" width="6" height="6" fill="#ffffff"/><rect x="12" y="102" width="6" height="6" fill="#e9e9e9"/><rect x="12" y="108" width="6" height="6" fill="#ffffff"/><rect x="12" y="114" width="6" height="6" fill="#e9e9e9"/><rect x="12" y="120" width="6" height="6" fill="#ffffff"/><rect x="12" y="126" width="6" height="6" fill="#e9e9e9"/><rect x="18" y="0" width="6" height="6" fill="#e9e9e9"/><rect x="18" y="6" width="6" height="6" fill="#ffffff"/><rect x="18" y="12" width="6" height="6" fill="#e9e9e9"/><rect x="18" y="18" width="6" height="6" fill="#ffffff"/><rect x="18" y="24" width="6" height="6" fill="#e9e9e9"/><rect x="18" y="30" width="6" height="6" fill="#ffffff"/><rect x="18" y="36" width="6" height="6" fill="#e9e9e9"/><rect x="18" y="42" width="6" height="6" fill="#ffffff"/><rect x="18" y="48" width="6" height="6" fill="#e9e9e9"/><rect x="18" y="54" width="6" height="6" fill="#ffffff"/><rect x="18" y="60" width="6" height="6" fill="#e9e9e9"/><rect x="18" y="66" width="6" height="6" fill="#ffffff"/><rect x="18" y="72" width="6" height="6" fill="#e9e9e9"/><rect x="18" y="78" width="6" height="6" fill="#ffffff"/><rect x="18" y="84" width="6" height="6" fill="#e9e9e9"/><rect x="18" y="90" width="6" height="6" fill="#ffffff"/><rect x="18" y="96" width="6" height="6" fill="#e9e9e9"/><rect x="18" y="102" width="6" height="6" fill="#ffffff"/><rect x="18" y="108" width="6" height="6" fill="#e9e9e9"/><rect x="18" y="114" width="6" height="6" fill="#ffffff"/><rect x="18" y="120" width="6" height="6" fill="#e9e9e9"/><rect x="18" y="126" width="6" height="6" fill="#ffffff"/><rect x="24" y="0" width="6" height="6" fill="#ffffff"/><rect x="24" y="6" width="6" height="6" fill="#e9e9e9"/><rect x="24" y="12" width="6" height="6" fill="#ffffff"/><rect x="24" y="18" width="6" height="6" fill="#e9e9e9"/><rect x="24" y="24" width="6" height="6" fill="#ffffff"/><rect x="24" y="30" width="6" height="6" fill="#e9e9e9"/><rect x="24" y="36" width="6" height="6" fill="#ffffff"/><rect x="24" y="42" width="6" height="6" fill="#e9e9e9"/><rect x="24" y="48" width="6" height="6" fill="#ffffff"/><rect x="24" y="54" width="6" height="6" fill="#e9e9e9"/><rect x="24" y="60" width="6" height="6" fill="#ffffff"/><rect x="24" y="66" width="6" height="6" fill="#e9e9e9"/><rect x="24" y="72" width="6" height="6" fill="#ffffff"/><rect x="24" y="78" width="6" height="6" fill="#e9e9e9"/><rect x="24" y="84" width="6" height="6" fill="#ffffff"/><rect x="24" y="90" width="6" height="6" fill="#e9e9e9"/><rect x="24" y="96" width="6" height="6" fill="#ffffff"/><rect x="24" y="102" width="6" height="6" fill="#e9e9e9"/><rect x="24" y="108" width="6" height="6" fill="#ffffff"/><rect x="24" y="114" width="6" height="6" fill="#e9e9e9"/><rect x="24" y="120" width="6" height="6" fill="#ffffff"/><rect x="24" y="126" width="6" height="6" fill="#e9e9e9"/><rect x="30" y="0" width="6" height="6" fill="#e9e9e9"/><rect x="30" y="6" width="6" height="6" fill="#ffffff"/><rect x="30" y="12" width="6" height="6" fill="#e9e9e9"/><rect x="30" y="18" width="6" height="6" fill="#ffffff"/><rect x="30" y="24" width="6" height="6" fill="#e9e9e9"/><rect x="30" y="30" width="6" height="6" fill="#ffffff"/><rect x="30" y="36" width="6" height="6" fill="#e9e9e9"/><rect x="30" y="42" width="6" height="6" fill="#ffffff"/><rect x="30" y="48" width="6" height="6" fill="#e9e9e9"/><rect x="30" y="54" width="6" height="6" fill="#ffffff"/><rect x="30" y="60" width="6" height="6" fill="#e9e9e9"/><rect x="30" y="66" width="6" height="6" fill="#ffffff"/><rect x="30" y="72" width="6" height="6" fill="#e9e9e9"/><rect x="30" y="78" width="6" height="6" fill="#ffffff"/><rect x="30" y="84" width="6" height="6" fill="#e9e9e9"/><rect x="30" y="90" width="6" height="6" fill="#ffffff"/><rect x="30" y="96" width="6" height="6" fill="#e9e9e9"/><rect x="30" y="102" width="6" height="6" fill="#ffffff"/><rect x="30" y="108" width="6" height="6" fill="#e9e9e9"/><rect x="30" y="114" width="6" height="6" fill="#ffffff"/><rect x="30" y="120" width="6" height="6" fill="#e9e9e9"/><rect x="30" y="126" width="6" height="6" fill="#ffffff"/><rect x="36" y="0" width="6" height="6" fill="#ffffff"/><rect x="36" y="6" width="6" height="6" fill="#e9e9e9"/><rect x="36" y="12" width="6" height="6" fill="#ffffff"/><rect x="36" y="18" width="6" height="6" fill="#e9e9e9"/><rect x="36" y="24" width="6" height="6" fill="#ffffff"/><rect x="36" y="30" width="6" height="6" fill="#e9e9e9"/><rect x="36" y="36" width="6" height="6" fill="#ffffff"/><rect x="36" y="42" width="6" height="6" fill="#e9e9e9"/><rect x="36" y="48" width="6" height="6" fill="#ffffff"/><rect x="36" y="54" width="6" height="6" fill="#e9e9e9"/><rect x="36" y="60" width="6" height="6" fill="#ffffff"/><rect x="36" y="66" width="6" height="6" fill="#e9e9e9"/><rect x="36" y="72" width="6" height="6" fill="#ffffff"/><rect x="36" y="78" width="6" height="6" fill="#e9e9e9"/><rect x="36" y="84" width="6" height="6" fill="#ffffff"/><rect x="36" y="90" width="6" height="6" fill="#e9e9e9"/><rect x="36" y="96" width="6" height="6" fill="#ffffff"/><rect x="36" y="102" width="6" height="6" fill="#e9e9e9"/><rect x="36" y="108" width="6" height="6" fill="#ffffff"/><rect x="36" y="114" width="6" height="6" fill="#e9e9e9"/><rect x="36" y="120" width="6" height="6" fill="#ffffff"/><rect x="36" y="126" width="6" height="6" fill="#e9e9e9"/><rect x="42" y="0" width="6" height="6" fill="#e9e9e9"/><rect x="42" y="6" width="6" height="6" fill="#ffffff"/><rect x="42" y="12" width="6" height="6" fill="#e9e9e9"/><rect x="42" y="18" width="6" height="6" fill="#ffffff"/><rect x="42" y="24" width="6" height="6" fill="#e9e9e9"/><rect x="42" y="30" width="6" height="6" fill="#ffffff"/><rect x="42" y="36" width="6" height="6" fill="#e9e9e9"/><rect x="42" y="42" width="6" height="6" fill="#ffffff"/><rect x="42" y="48" width="6" height="6" fill="#e9e9e9"/><rect x="42" y="54" width="6" height="6" fill="#ffffff"/><rect x="42" y="60" width="6" height="6" fill="#e9e9e9"/><rect x="42" y="66" width="6" height="6" fill="#ffffff"/><rect x="42" y="72" width="6" height="6" fill="#e9e9e9"/><rect x="42" y="78" width="6" height="6" fill="#ffffff"/><rect x="42" y="84" width="6" height="6" fill="#e9e9e9"/><rect x="42" y="90" width="6" height="6" fill="#ffffff"/><rect x="42" y="96" width="6" height="6" fill="#e9e9e9"/><rect x="42" y="102" width="6" height="6" fill="#ffffff"/><rect x="42" y="108" width="6" height="6" fill="#e9e9e9"/><rect x="42" y="114" width="6" height="6" fill="#ffffff"/><rect x="42" y="120" width="6" height="6" fill="#e9e9e9"/><rect x="42" y="126" width="6" height="6" fill="#ffffff"/><rect x="48" y="0" width="6" height="6" fill="#ffffff"/><rect x="48" y="6" width="6" height="6" fill="#e9e9e9"/><rect x="48" y="12" width="6" height="6" fill="#ffffff"/><rect x="48" y="18" width="6" height="6" fill="#e9e9e9"/><rect x="48" y="24" width="6" height="6" fill="#ffffff"/><rect x="48" y="30" width="6" height="6" fill="#e9e9e9"/><rect x="48" y="36" width="6" height="6" fill="#ffffff"/><rect x="48" y="42" width="6" height="6" fill="#e9e9e9"/><rect x="48" y="48" width="6" height="6" fill="#ffffff"/><rect x="48" y="54" width="6" height="6" fill="#e9e9e9"/><rect x="48" y="60" width="6" height="6" fill="#ffffff"/><rect x="48" y="66" width="6" height="6" fill="#e9e9e9"/><rect x="48" y="72" width="6" height="6" fill="#ffffff"/><rect x="48" y="78" width="6" height="6" fill="#e9e9e9"/><rect x="48" y="84" width="6" height="6" fill="#ffffff"/><rect x="48" y="90" width="6" height="6" fill="#e9e9e9"/><rect x="48" y="96" width="6" height="6" fill="#ffffff"/><rect x="48" y="102" width="6" height="6" fill="#e9e9e9"/><rect x="48" y="108" width="6" height="6" fill="#ffffff"/><rect x="48" y="114" width="6" height="6" fill="#e9e9e9"/><rect x="48" y="120" width="6" height="6" fill="#ffffff"/><rect x="48" y="126" width="6" height="6" fill="#e9e9e9"/><rect x="54" y="0" width="6" height="6" fill="#e9e9e9"/><rect x="54" y="6" width="6" height="6" fill="#ffffff"/><rect x="54" y="12" width="6" height="6" fill="#e9e9e9"/><rect x="54" y="18" width="6" height="6" fill="#ffffff"/><rect x="54" y="24" width="6" height="6" fill="#e9e9e9"/><rect x="54" y="30" width="6" height="6" fill="#ffffff"/><rect x="54" y="36" width="6" height="6" fill="#e9e9e9"/><rect x="54" y="42" width="6" height="6" fill="#ffffff"/><rect x="54" y="48" width="6" height="6" fill="#e9e9e9"/><rect x="54" y="54" width="6" height="6" fill="#ffffff"/><rect x="54" y="60" width="6" height="6" fill="#e9e9e9"/><rect x="54" y="66" width="6" height="6" fill="#ffffff"/><rect x="54" y="72" width="6" height="6" fill="#e9e9e9"/><rect x="54" y="78" width="6" height="6" fill="#ffffff"/><rect x="54" y="84" width="6" height="6" fill="#e9e9e9"/><rect x="54" y="90" width="6" height="6" fill="#ffffff"/><rect x="54" y="96" width="6" height="6" fill="#e9e9e9"/><rect x="54" y="102" width="6" height="6" fill="#ffffff"/><rect x="54" y="108" width="6" height="6" fill="#e9e9e9"/><rect x="54" y="114" width="6" height="6" fill="#ffffff"/><rect x="54" y="120" width="6" height="6" fill="#e9e9e9"/><rect x="54" y="126" width="6" height="6" fill="#ffffff"/><rect x="60" y="0" width="6" height="6" fill="#ffffff"/><rect x="60" y="6" width="6" height="6" fill="#e9e9e9"/><rect x="60" y="12" width="6" height="6" fill="#ffffff"/><rect x="60" y="18" width="6" height="6" fill="#e9e9e9"/><rect x="60" y="24" width="6" height="6" fill="#ffffff"/><rect x="60" y="30" width="6" height="6" fill="#e9e9e9"/><rect x="60" y="36" width="6" height="6" fill="#ffffff"/><rect x="60" y="42" width="6" height="6" fill="#e9e9e9"/><rect x="60" y="48" width="6" height="6" fill="#ffffff"/><rect x="60" y="54" width="6" height="6" fill="#e9e9e9"/><rect x="60" y="60" width="6" height="6" fill="#ffffff"/><rect x="60" y="66" width="6" height="6" fill="#e9e9e9"/><rect x="60" y="72" width="6" height="6" fill="#ffffff"/><rect x="60" y="78" width="6" height="6" fill="#e9e9e9"/><rect x="60" y="84" width="6" height="6" fill="#ffffff"/><rect x="60" y="90" width="6" height="6" fill="#e9e9e9"/><rect x="60" y="96" width="6" height="6" fill="#ffffff"/><rect x="60" y="102" width="6" height="6" fill="#e9e9e9"/><rect x="60" y="108" width="6" height="6" fill="#ffffff"/><rect x="60" y="114" width="6" height="6" fill="#e9e9e9"/><rect x="60" y="120" width="6" height="6" fill="#ffffff"/><rect x="60" y="126" width="6" height="6" fill="#e9e9e9"/><rect x="66" y="0" width="6" height="6" fill="#e9e9e9"/><rect x="66" y="6" width="6" height="6" fill="#ffffff"/><rect x="66" y="12" width="6" height="6" fill="#e9e9e9"/><rect x="66" y="18" width="6" height="6" fill="#ffffff"/><rect x="66" y="24" width="6" height="6" fill="#e9e9e9"/><rect x="66" y="30" width="6" height="6" fill="#ffffff"/><rect x="66" y="36" width="6" height="6" fill="#e9e9e9"/><rect x="66" y="42" width="6" height="6" fill="#ffffff"/><rect x="66" y="48" width="6" height="6" fill="#e9e9e9"/><rect x="66" y="54" width="6" height="6" fill="#ffffff"/><rect x="66" y="60" width="6" height="6" fill="#e9e9e9"/><rect x="66" y="66" width="6" height="6" fill="#ffffff"/><rect x="66" y="72" width="6" height="6" fill="#e9e9e9"/><rect x="66" y="78" width="6" height="6" fill="#ffffff"/><rect x="66" y="84" width="6" height="6" fill="#e9e9e9"/><rect x="66" y="90" width="6" height="6" fill="#ffffff"/><rect x="66" y="96" width="6" height="6" fill="#e9e9e9"/><rect x="66" y="102" width="6" height="6" fill="#ffffff"/><rect x="66" y="108" width="6" height="6" fill="#e9e9e9"/><rect x="66" y="114" width="6" height="6" fill="#ffffff"/><rect x="66" y="120" width="6" height="6" fill="#e9e9e9"/><rect x="66" y="126" width="6" height="6" fill="#ffffff"/><rect x="72" y="0" width="6" height="6" fill="#ffffff"/><rect x="72" y="6" width="6" height="6" fill="#e9e9e9"/><rect x="72" y="12" width="6" height="6" fill="#ffffff"/><rect x="72" y="18" width="6" height="6" fill="#e9e9e9"/><rect x="72" y="24" width="6" height="6" fill="#ffffff"/><rect x="72" y="30" width="6" height="6" fill="#e9e9e9"/><rect x="72" y="36" width="6" height="6" fill="#ffffff"/><rect x="72" y="42" width="6" height="6" fill="#e9e9e9"/><rect x="72" y="48" width="6" height="6" fill="#ffffff"/><rect x="72" y="54" width="6" height="6" fill="#e9e9e9"/><rect x="72" y="60" width="6" height="6" fill="#ffffff"/><rect x="72" y="66" width="6" height="6" fill="#e9e9e9"/><rect x="72" y="72" width="6" height="6" fill="#ffffff"/><rect x="72" y="78" width="6" height="6" fill="#e9e9e9"/><rect x="72" y="84" width="6" height="6" fill="#ffffff"/><rect x="72" y="90" width="6" height="6" fill="#e9e9e9"/><rect x="72" y="96" width="6" height="6" fill="#ffffff"/><rect x="72" y="102" width="6" height="6" fill="#e9e9e9"/><rect x="72" y="108" width="6" height="6" fill="#ffffff"/><rect x="72" y="114" width="6" height="6" fill="#e9e9e9"/><rect x="72" y="120" width="6" height="6" fill="#ffffff"/><rect x="72" y="126" width="6" height="6" fill="#e9e9e9"/><rect x="78" y="0" width="6" height="6" fill="#e9e9e9"/><rect x="78" y="6" width="6" height="6" fill="#ffffff"/><rect x="78" y="12" width="6" height="6" fill="#e9e9e9"/><rect x="78" y="18" width="6" height="6" fill="#ffffff"/><rect x="78" y="24" width="6" height="6" fill="#e9e9e9"/><rect x="78" y="30" width="6" height="6" fill="#ffffff"/><rect x="78" y="36" width="6" height="6" fill="#e9e9e9"/><rect x="78" y="42" width="6" height="6" fill="#ffffff"/><rect x="78" y="48" width="6" height="6" fill="#e9e9e9"/><rect x="78" y="54" width="6" height="6" fill="#ffffff"/><rect x="78" y="60" width="6" height="6" fill="#e9e9e9"/><rect x="78" y="66" width="6" height="6" fill="#ffffff"/><rect x="78" y="72" width="6" height="6" fill="#e9e9e9"/><rect x="78" y="78" width="6" height="6" fill="#ffffff"/><rect x="78" y="84" width="6" height="6" fill="#e9e9e9"/><rect x="78" y="90" width="6" height="6" fill="#ffffff"/><rect x="78" y="96" width="6" height="6" fill="#e9e9e9"/><rect x="78" y="102" width="6" height="6" fill="#ffffff"/><rect x="78" y="108" width="6" height="6" fill="#e9e9e9"/><rect x="78" y="114" width="6" height="6" fill="#ffffff"/><rect x="78" y="120" width="6" height="6" fill="#e9e9e9"/><rect x="78" y="126" width="6" height="6" fill="#ffffff"/><rect x="84" y="0" width="6" height="6" fill="#ffffff"/><rect x="84" y="6" width="6" height="6" fill="#e9e9e9"/><rect x="84" y="12" width="6" height="6" fill="#ffffff"/><rect x="84" y="18" width="6" height="6" fill="#e9e9e9"/><rect x="84" y="24" width="6" height="6" fill="#ffffff"/><rect x="84" y="30" width="6" height="6" fill="#e9e9e9"/><rect x="84" y="36" width="6" height="6" fill="#ffffff"/><rect x="84" y="42" width="6" height="6" fill="#e9e9e9"/><rect x="84" y="48" width="6" height="6" fill="#ffffff"/><rect x="84" y="54" width="6" height="6" fill="#e9e9e9"/><rect x="84" y="60" width="6" height="6" fill="#ffffff"/><rect x="84" y="66" width="6" height="6" fill="#e9e9e9"/><rect x="84" y="72" width="6" height="6" fill="#ffffff"/><rect x="84" y="78" width="6" height="6" fill="#e9e9e9"/><rect x="84" y="84" width="6" height="6" fill="#ffffff"/><rect x="84" y="90" width="6" height="6" fill="#e9e9e9"/><rect x="84" y="96" width="6" height="6" fill="#ffffff"/><rect x="84" y="102" width="6" height="6" fill="#e9e9e9"/><rect x="84" y="108" width="6" height="6" fill="#ffffff"/><rect x="84" y="114" width="6" height="6" fill="#e9e9e9"/><rect x="84" y="120" width="6" height="6" fill="#ffffff"/><rect x="84" y="126" width="6" height="6" fill="#e9e9e9"/><rect x="90" y="0" width="6" height="6" fill="#e9e9e9"/><rect x="90" y="6" width="6" height="6" fill="#ffffff"/><rect x="90" y="12" width="6" height="6" fill="#e9e9e9"/><rect x="90" y="18" width="6" height="6" fill="#ffffff"/><rect x="90" y="24" width="6" height="6" fill="#e9e9e9"/><rect x="90" y="30" width="6" height="6" fill="#ffffff"/><rect x="90" y="36" width="6" height="6" fill="#e9e9e9"/><rect x="90" y="42" width="6" height="6" fill="#ffffff"/><rect x="90" y="48" width="6" height="6" fill="#e9e9e9"/><rect x="90" y="54" width="6" height="6" fill="#ffffff"/><rect x="90" y="60" width="6" height="6" fill="#e9e9e9"/><rect x="90" y="66" width="6" height="6" fill="#ffffff"/><rect x="90" y="72" width="6" height="6" fill="#e9e9e9"/><rect x="90" y="78" width="6" height="6" fill="#ffffff"/><rect x="90" y="84" width="6" height="6" fill="#e9e9e9"/><rect x="90" y="90" width="6" height="6" fill="#ffffff"/><rect x="90" y="96" width="6" height="6" fill="#e9e9e9"/><rect x="90" y="102" width="6" height="6" fill="#ffffff"/><rect x="90" y="108" width="6" height="6" fill="#e9e9e9"/><rect x="90" y="114" width="6" height="6" fill="#ffffff"/><rect x="90" y="120" width="6" height="6" fill="#e9e9e9"/><rect x="90" y="126" width="6" height="6" fill="#ffffff"/><rect x="96" y="0" width="6" height="6" fill="#ffffff"/><rect x="96" y="6" width="6" height="6" fill="#e9e9e9"/><rect x="96" y="12" width="6" height="6" fill="#ffffff"/><rect x="96" y="18" width="6" height="6" fill="#e9e9e9"/><rect x="96" y="24" width="6" height="6" fill="#ffffff"/><rect x="96" y="30" width="6" height="6" fill="#e9e9e9"/><rect x="96" y="36" width="6" height="6" fill="#ffffff"/><rect x="96" y="42" width="6" height="6" fill="#e9e9e9"/><rect x="96" y="48" width="6" height="6" fill="#ffffff"/><rect x="96" y="54" width="6" height="6" fill="#e9e9e9"/><rect x="96" y="60" width="6" height="6" fill="#ffffff"/><rect x="96" y="66" width="6" height="6" fill="#e9e9e9"/><rect x="96" y="72" width="6" height="6" fill="#ffffff"/><rect x="96" y="78" width="6" height="6" fill="#e9e9e9"/><rect x="96" y="84" width="6" height="6" fill="#ffffff"/><rect x="96" y="90" width="6" height="6" fill="#e9e9e9"/><rect x="96" y="96" width="6" height="6" fill="#ffffff"/><rect x="96" y="102" width="6" height="6" fill="#e9e9e9"/><rect x="96" y="108" width="6" height="6" fill="#ffffff"/><rect x="96" y="114" width="6" height="6" fill="#e9e9e9"/><rect x="96" y="120" width="6" height="6" fill="#ffffff"/><rect x="96" y="126" width="6" height="6" fill="#e9e9e9"/><rect x="102" y="0" width="6" height="6" fill="#e9e9e9"/><rect x="102" y="6" width="6" height="6" fill="#ffffff"/><rect x="102" y="12" width="6" height="6" fill="#e9e9e9"/><rect x="102" y="18" width="6" height="6" fill="#ffffff"/><rect x="102" y="24" width="6" height="6" fill="#e9e9e9"/><rect x="102" y="30" width="6" height="6" fill="#ffffff"/><rect x="102" y="36" width="6" height="6" fill="#e9e9e9"/><rect x="102" y="42" width="6" height="6" fill="#ffffff"/><rect x="102" y="48" width="6" height="6" fill="#e9e9e9"/><rect x="102" y="54" width="6" height="6" fill="#ffffff"/><rect x="102" y="60" width="6" height="6" fill="#e9e9e9"/><rect x="102" y="66" width="6" height="6" fill="#ffffff"/><rect x="102" y="72" width="6" height="6" fill="#e9e9e9"/><rect x="102" y="78" width="6" height="6" fill="#ffffff"/><rect x="102" y="84" width="6" height="6" fill="#e9e9e9"/><rect x="102" y="90" width="6" height="6" fill="#ffffff"/><rect x="102" y="96" width="6" height="6" fill="#e9e9e9"/><rect x="102" y="102" width="6" height="6" fill="#ffffff"/><rect x="102" y="108" width="6" height="6" fill="#e9e9e9"/><rect x="102" y="114" width="6" height="6" fill="#ffffff"/><rect x="102" y="120" width="6" height="6" fill="#e9e9e9"/><rect x="102" y="126" width="6" height="6" fill="#ffffff"/><rect x="108" y="0" width="6" height="6" fill="#ffffff"/><rect x="108" y="6" width="6" height="6" fill="#e9e9e9"/><rect x="108" y="12" width="6" height="6" fill="#ffffff"/><rect x="108" y="18" width="6" height="6" fill="#e9e9e9"/><rect x="108" y="24" width="6" height="6" fill="#ffffff"/><rect x="108" y="30" width="6" height="6" fill="#e9e9e9"/><rect x="108" y="36" width="6" height="6" fill="#ffffff"/><rect x="108" y="42" width="6" height="6" fill="#e9e9e9"/><rect x="108" y="48" width="6" height="6" fill="#ffffff"/><rect x="108" y="54" width="6" height="6" fill="#e9e9e9"/><rect x="108" y="60" width="6" height="6" fill="#ffffff"/><rect x="108" y="66" width="6" height="6" fill="#e9e9e9"/><rect x="108" y="72" width="6" height="6" fill="#ffffff"/><rect x="108" y="78" width="6" height="6" fill="#e9e9e9"/><rect x="108" y="84" width="6" height="6" fill="#ffffff"/><rect x="108" y="90" width="6" height="6" fill="#e9e9e9"/><rect x="108" y="96" width="6" height="6" fill="#ffffff"/><rect x="108" y="102" width="6" height="6" fill="#e9e9e9"/><rect x="108" y="108" width="6" height="6" fill="#ffffff"/><rect x="108" y="114" width="6" height="6" fill="#e9e9e9"/><rect x="108" y="120" width="6" height="6" fill="#ffffff"/><rect x="108" y="126" width="6" height="6" fill="#e9e9e9"/><defs><linearGradient id="bn"><stop offset="0" stop-color="#2c1d64"/><stop offset="0.25" stop-color="#1d1a6e"/><stop offset="0.75" stop-color="#1d1a6e"/><stop offset="1" stop-color="#2c1d64"/></linearGradient></defs><rect x="2" y="45.2" width="59" height="9.8" fill="url(#bn)"/><rect x="73" y="45.4" width="36" height="9.6" fill="url(#bn)"/><g fill="none" stroke="#c9a646" stroke-width="1"><path d="M16 46.5 Q13 50 16 53.5 M46 46.5 Q49 50 46 53.5 M78 46.5 Q75.5 50 78 53.5 M104.5 46.5 Q107 50 104.5 53.5"/></g><rect x="24" y="47" width="15" height="2.2" fill="#c4a45a"/><rect x="27" y="50" width="9" height="1.2" fill="#a89066"/><rect x="84" y="47.2" width="13" height="2" fill="#b59d66"/><rect x="86" y="50" width="9" height="1.2" fill="#a89066"/><circle cx="51.3" cy="78.2" r="2.6" fill="#2b2850" stroke="#b8a070" stroke-width="0.8"/><circle cx="56.5" cy="115.6" r="12" fill="#d4b060"/><circle cx="56.5" cy="115.6" r="11" fill="#1f2584"/><g fill="none" stroke="#c9a44a" stroke-width="2" stroke-dasharray="1.5 0.9"><path d="M50 109.5 Q47 117 51.5 123 Q53 124.5 55 125"/><path d="M63 109.5 Q66 117 61.5 123 Q60 124.5 58 125"/></g><circle cx="9" cy="2.5" r="1" fill="#f0d890"/></g></svg>
<div class="a" style="left:1696px;top:784px;width:16px;height:16px;border:1px solid #1a1a1a;border-radius:4px;background:linear-gradient(#454545,#2c2c2c)"></div>
<div class="a t" style="left:1716px;top:784px;font-size:13.5px;line-height:16px;color:#e0e0e0;">Export Selected Only</div>
<div class="a" style="left:1693px;top:804px;width:50px;height:33px;background:#333333;border:1px solid #1a1a1a;border-radius:6px"></div>
<svg class="a" style="left:1702px;top:808px" width="33" height="24"><defs><clipPath id="swc"><rect x="0" y="0" width="33" height="24" rx="4"/></clipPath></defs><g clip-path="url(#swc)"><rect x="0" y="0" width="33" height="24" fill="#fff"/><rect x="0" y="0" width="4" height="4" fill="#c9c9c9"/><rect x="0" y="4" width="4" height="4" fill="#b3b3b3"/><rect x="0" y="8" width="4" height="4" fill="#c9c9c9"/><rect x="0" y="12" width="4" height="4" fill="#b3b3b3"/><rect x="0" y="16" width="4" height="4" fill="#c9c9c9"/><rect x="0" y="20" width="4" height="4" fill="#b3b3b3"/><rect x="4" y="0" width="4" height="4" fill="#b3b3b3"/><rect x="4" y="4" width="4" height="4" fill="#c9c9c9"/><rect x="4" y="8" width="4" height="4" fill="#b3b3b3"/><rect x="4" y="12" width="4" height="4" fill="#c9c9c9"/><rect x="4" y="16" width="4" height="4" fill="#b3b3b3"/><rect x="4" y="20" width="4" height="4" fill="#c9c9c9"/><rect x="8" y="0" width="4" height="4" fill="#c9c9c9"/><rect x="8" y="4" width="4" height="4" fill="#b3b3b3"/><rect x="8" y="8" width="4" height="4" fill="#c9c9c9"/><rect x="8" y="12" width="4" height="4" fill="#b3b3b3"/><rect x="8" y="16" width="4" height="4" fill="#c9c9c9"/><rect x="8" y="20" width="4" height="4" fill="#b3b3b3"/><rect x="12" y="0" width="4" height="4" fill="#b3b3b3"/><rect x="12" y="4" width="4" height="4" fill="#c9c9c9"/><rect x="12" y="8" width="4" height="4" fill="#b3b3b3"/><rect x="12" y="12" width="4" height="4" fill="#c9c9c9"/><rect x="12" y="16" width="4" height="4" fill="#b3b3b3"/><rect x="12" y="20" width="4" height="4" fill="#c9c9c9"/></g></svg>
<div class="a t" style="left:1751px;top:812px;font-size:13.5px;line-height:16px;color:#e0e0e0;">Background Color</div>
<div class="a" style="left:1464px;top:885px;width:194px;height:34px;background:#2f2f2f;border:1px solid #1c1c1c;border-radius:6px"></div>
<div class="a t" style="left:1472px;top:893px;font-size:13.5px;line-height:16px;color:#e6e6e6;">ne/pedro/badge_hall.png</div>
<svg class="a" style="left:1633.0px;top:893.0px" width="18" height="18" viewBox="0 0 18 18"><path d="M1.5 13.5 V3 H6 L7.5 4.5 H13.5 V6.5" fill="none" stroke="#ececec" stroke-width="1.4"/><path d="M1.5 13.5 L4 7 H16 L13.5 13.5Z" fill="none" stroke="#ececec" stroke-width="1.4" stroke-linejoin="round"/></svg>
<div class="a" style="left:1663px;top:885px;width:160px;height:34px;background:#333333;border:1px solid #1c1c1c;border-radius:6px"></div>
<div class="a t" style="left:1675px;top:894px;font-size:13.5px;line-height:16px;color:#e0e0e0;">PNG (*.png)</div>
<svg class="a" style="left:1800px;top:898px" width="12" height="8"><path d="M0.5 0.5 H11.5 L6 6.5Z" fill="#eee"/></svg>
<div class="a" style="left:1828px;top:885px;width:35px;height:34px;background:#333333;border:1px solid #1c1c1c;border-radius:6px"></div>
<svg class="a" style="left:1837.0px;top:893.0px" width="18" height="18" viewBox="0 0 18 18"><g transform="translate(9 9)"><g fill="#eee"><rect x="-1.6" y="-8" width="3.2" height="4" transform="rotate(0)"/><rect x="-1.6" y="-8" width="3.2" height="4" transform="rotate(45)"/><rect x="-1.6" y="-8" width="3.2" height="4" transform="rotate(90)"/><rect x="-1.6" y="-8" width="3.2" height="4" transform="rotate(135)"/><rect x="-1.6" y="-8" width="3.2" height="4" transform="rotate(180)"/><rect x="-1.6" y="-8" width="3.2" height="4" transform="rotate(225)"/><rect x="-1.6" y="-8" width="3.2" height="4" transform="rotate(270)"/><rect x="-1.6" y="-8" width="3.2" height="4" transform="rotate(315)"/></g><circle r="5.3" fill="#eee"/><circle r="2.2" fill="#333"/></g></svg>
<div class="a" style="left:1464px;top:924px;width:400px;height:34px;background:#313131;border:1px solid #1c1c1c;border-radius:6px"></div>
<div class="a t" style="left:1464px;top:933px;font-size:13.5px;line-height:16px;color:#dcdcdc;width:400px;text-align:center">Export</div>
<div class="a" style="left:1869px;top:98px;width:51px;height:871px;background:#353535"></div>
<div class="a" style="left:1878px;top:250px;width:36px;height:1px;background:#2f2f2f"></div>
<div class="a" style="left:1878px;top:328px;width:36px;height:1px;background:#2f2f2f"></div>
<div class="a" style="left:1878px;top:406px;width:36px;height:1px;background:#2f2f2f"></div>
<div class="a" style="left:1878px;top:521px;width:36px;height:1px;background:#2f2f2f"></div>
<div class="a" style="left:1878px;top:673px;width:36px;height:1px;background:#2f2f2f"></div>
<div class="a" style="left:1878px;top:788px;width:36px;height:1px;background:#2f2f2f"></div>
<div class="a" style="left:1878px;top:866px;width:36px;height:1px;background:#2f2f2f"></div>
<svg class="a" style="left:1886.5px;top:111.0px" width="18" height="18" viewBox="0 0 18 18"><path d="M3 2.5 H9.5 L13 6 V15.5 H3Z" fill="none" stroke="#ececec" stroke-width="1.7"/><path d="M14 0.5 L14.9 2.5 L17 2.6 L15.4 4 L16 6 L14 4.9 L12 6 L12.6 4 L11 2.6 L13.1 2.5Z" fill="#17a317"/></svg>
<svg class="a" style="left:1886.5px;top:147.5px" width="18" height="18" viewBox="0 0 18 18"><path d="M2 15 V3 H7 L8.5 4.5 H14 V7" fill="none" stroke="#ececec" stroke-width="1.6"/><path d="M2 15.5 L4.5 8 H16.5 L14.5 15.5Z" fill="#ececec"/></svg>
<svg class="a" style="left:1886.5px;top:184.5px" width="18" height="18" viewBox="0 0 18 18"><path d="M9 1 V7" stroke="#17a317" stroke-width="1.8"/><path d="M5.5 5.5 L9 9.5 L12.5 5.5Z" fill="#17a317"/><path d="M2 9 H5 V11 H13 V9 H16 V16 H2Z" fill="#ececec"/><rect x="5" y="12.5" width="8" height="1.2" fill="#353535"/></svg>
<svg class="a" style="left:1886.5px;top:220.5px" width="18" height="18" viewBox="0 0 18 18"><rect x="4.5" y="2" width="9" height="3.5" fill="#bbb"/><rect x="1.5" y="6" width="15" height="6" rx="1" fill="#bbb"/><rect x="4.5" y="10" width="9" height="6" fill="#ececec"/></svg>
<svg class="a" style="left:1886.5px;top:262.0px" width="18" height="18" viewBox="0 0 18 18"><path d="M4.5 8 V1.5 H11 L14.5 5 V16 H4.5 V12" fill="none" stroke="#ececec" stroke-width="1.6"/><path d="M1.5 10 H8" stroke="#17a317" stroke-width="1.7"/><path d="M7.5 7 L11 10 L7.5 13Z" fill="#17a317"/></svg>
<svg class="a" style="left:1886.5px;top:298.5px" width="18" height="18" viewBox="0 0 18 18"><path d="M12 7.5 V4.5 L9 1.5 H2.5 V16 H12 V12.5" fill="none" stroke="#ececec" stroke-width="1.7"/><path d="M9 1.5 V4.5 H12" fill="none" stroke="#ececec" stroke-width="1.3"/><path d="M7 10 H13" stroke="#17a317" stroke-width="1.7"/><path d="M12.5 7 L16.5 10 L12.5 13Z" fill="#17a317"/></svg>
<svg class="a" style="left:1886.5px;top:339.5px" width="18" height="18" viewBox="0 0 18 18"><path d="M4 6 H11 A3.5 3.5 0 0 1 11 13 H8" fill="none" stroke="#ececec" stroke-width="1.7"/><path d="M6.5 2.5 L2.5 6 L6.5 9.5Z" fill="#ececec"/></svg>
<svg class="a" style="left:1886.5px;top:376.5px" width="18" height="18" viewBox="0 0 18 18"><path d="M14 6 H7 A3.5 3.5 0 0 0 7 13 H10" fill="none" stroke="#7a7a7a" stroke-width="1.7"/><path d="M11.5 2.5 L15.5 6 L11.5 9.5Z" fill="#7a7a7a"/></svg>
<svg class="a" style="left:1886.5px;top:418.0px" width="18" height="18" viewBox="0 0 18 18"><rect x="2" y="2" width="9" height="9" fill="#ececec"/><rect x="6.5" y="6.5" width="9.5" height="9.5" fill="#ececec" stroke="#353535" stroke-width="1"/></svg>
<svg class="a" style="left:1886.5px;top:455.0px" width="18" height="18" viewBox="0 0 18 18"><circle cx="5" cy="13.5" r="2.3" fill="none" stroke="#ececec" stroke-width="1.5"/><circle cx="13" cy="13.5" r="2.3" fill="none" stroke="#ececec" stroke-width="1.5"/><path d="M6 11.5 L12.5 1.5 M12 11.5 L5.5 1.5" stroke="#ececec" stroke-width="1.4"/></svg>
<svg class="a" style="left:1886.5px;top:492.5px" width="18" height="18" viewBox="0 0 18 18"><rect x="3" y="3.5" width="12" height="13" fill="none" stroke="#ececec" stroke-width="1.2"/><rect x="5" y="5.5" width="8" height="9.5" fill="#ececec"/><rect x="6.5" y="2" width="5" height="2.5" fill="#ececec"/></svg>
<svg class="a" style="left:1886.5px;top:533.0px" width="18" height="18" viewBox="0 0 18 18"><circle cx="8" cy="8" r="7" fill="#ececec"/><path d="M12.5 12.5 L16 16" stroke="#ececec" stroke-width="2.4"/><rect x="4.5" y="4.5" width="7" height="7" fill="none" stroke="#555" stroke-width="1" stroke-dasharray="1 1"/></svg>
<svg class="a" style="left:1886.5px;top:570.0px" width="18" height="18" viewBox="0 0 18 18"><circle cx="8" cy="8" r="7" fill="#ececec"/><path d="M12.5 12.5 L16 16" stroke="#ececec" stroke-width="2.4"/><circle cx="6.5" cy="6.5" r="3" fill="#353535"/><rect x="7" y="7" width="5.5" height="5.5" fill="#353535"/></svg>
<svg class="a" style="left:1886.5px;top:607.0px" width="18" height="18" viewBox="0 0 18 18"><circle cx="8" cy="8" r="7" fill="#ececec"/><path d="M12.5 12.5 L16 16" stroke="#ececec" stroke-width="2.4"/><rect x="5" y="3.5" width="6" height="9" fill="none" stroke="#353535" stroke-width="1.3"/></svg>
<svg class="a" style="left:1886.5px;top:644.0px" width="18" height="18" viewBox="0 0 18 18"><path d="M2 5 V2 H5 M13 2 H16 V5 M16 13 V16 H13 M5 16 H2 V13" fill="none" stroke="#999" stroke-width="1"/><rect x="4" y="4" width="10" height="10" fill="none" stroke="#ececec" stroke-width="1.3"/><path d="M9 6 V12 M6 9 H12" stroke="#ececec" stroke-width="1.4"/></svg>
<svg class="a" style="left:1886.5px;top:684.0px" width="18" height="18" viewBox="0 0 18 18"><rect x="1.5" y="1.5" width="9" height="9" fill="#ececec"/><rect x="5.5" y="5.5" width="11" height="11" fill="#139c13" stroke="#353535" stroke-width="1"/></svg>
<svg class="a" style="left:1886.5px;top:721.0px" width="18" height="18" viewBox="0 0 18 18"><rect x="1.5" y="1.5" width="9" height="9" fill="#ececec"/><rect x="5.5" y="5.5" width="11" height="11" fill="#ececec" stroke="#353535" stroke-width="1"/><rect x="8" y="11" width="6" height="4" fill="#353535"/><path d="M9.2 11 V9.3 A1.8 1.8 0 0 1 12.8 9.3 V11" fill="none" stroke="#353535" stroke-width="1.1"/></svg>
<svg class="a" style="left:1886.5px;top:759.5px" width="18" height="18" viewBox="0 0 18 18"><rect x="1.5" y="1.5" width="9" height="9" fill="#ececec"/><rect x="5.5" y="5.5" width="11" height="11" fill="#ececec" stroke="#353535" stroke-width="1"/><rect x="8" y="11" width="6" height="4" fill="#353535"/><path d="M12 11 V9 A1.8 1.8 0 0 1 15.5 9" fill="none" stroke="#353535" stroke-width="1.1"/></svg>
<svg class="a" style="left:1886.5px;top:800.0px" width="18" height="18" viewBox="0 0 18 18"><circle cx="7.5" cy="7.5" r="3.8" fill="#ececec"/><path d="M8 13 L13.5 8 V13Z" fill="#bbb"/><g fill="#17a317"><rect x="1" y="1" width="2.4" height="2.4"/><rect x="14.6" y="1" width="2.4" height="2.4"/><rect x="1" y="14.6" width="2.4" height="2.4"/><rect x="14.6" y="14.6" width="2.4" height="2.4"/></g></svg>
<svg class="a" style="left:1886.5px;top:837.0px" width="18" height="18" viewBox="0 0 18 18"><circle cx="8" cy="8" r="4.5" fill="#ececec"/><path d="M9 14 L15 8.5 V14Z" fill="#999"/><g fill="#ececec"><rect x="2" y="2" width="2" height="2"/><rect x="14" y="2" width="2" height="2"/><rect x="2" y="14" width="2" height="2"/><rect x="14" y="14" width="2" height="2"/></g></svg>
<svg class="a" style="left:1886.5px;top:877.0px" width="18" height="18" viewBox="0 0 18 18"><path d="M2.5 13.2 V2.6 H13.4" fill="none" stroke="#eee" stroke-width="1.3"/><path d="M16.2 2.9 L17.1 3.8 L11.4 10.9 L9.6 9.1Z" fill="#eee"/><path d="M8.9 9.9 L10.7 11.6 L9.4 12.8 L7.7 11.1Z" fill="#eee"/><path d="M7.4 11.6 Q4.2 12.6 3.2 16.3 Q7.2 16 8.9 13.2Z" fill="#0aa0f0"/></svg>
<div class="a" style="left:1878px;top:908px;width:36px;height:33px;background:#353535;border:1px solid #1c1c1c;border-radius:6px"></div>
<svg class="a" style="left:1890px;top:920px" width="12" height="8"><path d="M0.5 0.5 H11.5 L6 6.5Z" fill="#eee"/></svg>
<div class="a" style="left:0;top:969px;width:1920px;height:71px;background:#363636"></div>
<svg class="a" style="left:1px;top:971px" width="34" height="34"><rect x="0" y="0" width="33" height="33" fill="#fff"/><path d="M3.5 3.5 L29.5 29.5 M29.5 3.5 L3.5 29.5" stroke="#c91f38" stroke-width="2.2" stroke-linecap="round"/></svg>
<svg class="a" style="left:0;top:988px" width="1700" height="16"><rect x="35" y="0" width="18" height="16" fill="#052659"/><rect x="54" y="0" width="18" height="16" fill="#06377e"/><rect x="73" y="0" width="18" height="16" fill="#0848a4"/><rect x="92" y="0" width="18" height="16" fill="#0b5acf"/><rect x="111" y="0" width="18" height="16" fill="#0d6efd"/><rect x="130" y="0" width="18" height="16" fill="#3988fd"/><rect x="149" y="0" width="18" height="16" fill="#5d9efe"/><rect x="168" y="0" width="18" height="16" fill="#86b6fe"/><rect x="187" y="0" width="18" height="16" fill="#aaccfe"/><rect x="206" y="0" width="18" height="16" fill="#240655"/><rect x="225" y="0" width="18" height="16" fill="#330879"/><rect x="244" y="0" width="18" height="16" fill="#420a9d"/><rect x="263" y="0" width="18" height="16" fill="#540dc6"/><rect x="282" y="0" width="18" height="16" fill="#6610f2"/><rect x="301" y="0" width="18" height="16" fill="#823bf4"/><rect x="320" y="0" width="18" height="16" fill="#985ff6"/><rect x="339" y="0" width="18" height="16" fill="#b288f8"/><rect x="358" y="0" width="18" height="16" fill="#c9abfa"/><rect x="377" y="0" width="18" height="16" fill="#271744"/><rect x="396" y="0" width="18" height="16" fill="#382160"/><rect x="415" y="0" width="18" height="16" fill="#482b7d"/><rect x="434" y="0" width="18" height="16" fill="#5b369e"/><rect x="453" y="0" width="18" height="16" fill="#6f42c1"/><rect x="472" y="0" width="18" height="16" fill="#8964cc"/><rect x="491" y="0" width="18" height="16" fill="#9f80d5"/><rect x="510" y="0" width="18" height="16" fill="#b7a0e0"/><rect x="529" y="0" width="18" height="16" fill="#cdbde9"/><rect x="548" y="0" width="18" height="16" fill="#4b122e"/><rect x="567" y="0" width="18" height="16" fill="#6b1a42"/><rect x="586" y="0" width="18" height="16" fill="#8b2156"/><rect x="605" y="0" width="18" height="16" fill="#af2a6c"/><rect x="624" y="0" width="18" height="16" fill="#d63384"/><rect x="643" y="0" width="18" height="16" fill="#dd589a"/><rect x="662" y="0" width="18" height="16" fill="#e476ad"/><rect x="681" y="0" width="18" height="16" fill="#ea99c2"/><rect x="700" y="0" width="18" height="16" fill="#f1b8d4"/><rect x="719" y="0" width="18" height="16" fill="#4d1318"/><rect x="738" y="0" width="18" height="16" fill="#6e1a22"/><rect x="756" y="0" width="17" height="16" fill="#8f222d"/><rect x="774" y="0" width="17" height="16" fill="#b42b39"/><rect x="792" y="0" width="17" height="16" fill="#dc3545"/><rect x="810" y="0" width="17" height="16" fill="#e25966"/><rect x="828" y="0" width="17" height="16" fill="#e87882"/><rect x="846" y="0" width="17" height="16" fill="#ee9aa2"/><rect x="864" y="0" width="17" height="16" fill="#f3b8be"/><rect x="882" y="0" width="17" height="16" fill="#592c07"/><rect x="900" y="0" width="17" height="16" fill="#7e3f0a"/><rect x="918" y="0" width="17" height="16" fill="#a4520d"/><rect x="936" y="0" width="17" height="16" fill="#cf6710"/><rect x="954" y="0" width="17" height="16" fill="#fd7e14"/><rect x="972" y="0" width="17" height="16" fill="#fd953e"/><rect x="990" y="0" width="17" height="16" fill="#fea962"/><rect x="1008" y="0" width="17" height="16" fill="#febe8a"/><rect x="1026" y="0" width="17" height="16" fill="#fed2ad"/><rect x="1044" y="0" width="17" height="16" fill="#594402"/><rect x="1062" y="0" width="17" height="16" fill="#806004"/><rect x="1080" y="0" width="17" height="16" fill="#a67d05"/><rect x="1098" y="0" width="17" height="16" fill="#d19e06"/><rect x="1116" y="0" width="17" height="16" fill="#ffc107"/><rect x="1134" y="0" width="17" height="16" fill="#ffcc34"/><rect x="1152" y="0" width="17" height="16" fill="#ffd559"/><rect x="1170" y="0" width="17" height="16" fill="#ffe083"/><rect x="1188" y="0" width="17" height="16" fill="#ffe9a8"/><rect x="1206" y="0" width="17" height="16" fill="#0e3a18"/><rect x="1224" y="0" width="17" height="16" fill="#145422"/><rect x="1242" y="0" width="17" height="16" fill="#1a6d2d"/><rect x="1260" y="0" width="17" height="16" fill="#218939"/><rect x="1278" y="0" width="17" height="16" fill="#28a745"/><rect x="1296" y="0" width="17" height="16" fill="#4fb766"/><rect x="1314" y="0" width="17" height="16" fill="#6fc482"/><rect x="1332" y="0" width="17" height="16" fill="#94d3a2"/><rect x="1350" y="0" width="17" height="16" fill="#b4e0be"/><rect x="1368" y="0" width="17" height="16" fill="#0b4635"/><rect x="1386" y="0" width="17" height="16" fill="#10644c"/><rect x="1404" y="0" width="17" height="16" fill="#158362"/><rect x="1422" y="0" width="17" height="16" fill="#1aa57c"/><rect x="1440" y="0" width="17" height="16" fill="#20c997"/><rect x="1458" y="0" width="17" height="16" fill="#48d3aa"/><rect x="1476" y="0" width="17" height="16" fill="#6adbb9"/><rect x="1494" y="0" width="17" height="16" fill="#90e4cb"/><rect x="1512" y="0" width="17" height="16" fill="#b1ecdb"/><rect x="1530" y="0" width="17" height="16" fill="#083940"/><rect x="1548" y="0" width="17" height="16" fill="#0c515c"/><rect x="1566" y="0" width="17" height="16" fill="#0f6978"/><rect x="1584" y="0" width="17" height="16" fill="#138597"/><rect x="1602" y="0" width="17" height="16" fill="#17a2b8"/><rect x="1620" y="0" width="17" height="16" fill="#41b3c5"/><rect x="1638" y="0" width="17" height="16" fill="#64c1cf"/><rect x="1656" y="0" width="17" height="16" fill="#8bd0dc"/><rect x="1674" y="0" width="17" height="16" fill="#aedee6"/></svg>
<svg class="a" style="left:1855px;top:980px" width="65" height="20"><path d="M3.5 10.5 L9 4.5 L14.5 10.5" fill="none" stroke="#8a8a8a" stroke-width="1.5"/><path d="M26.5 3.5 L32 9.5 L37.5 3.5" fill="none" stroke="#8a8a8a" stroke-width="1.5"/><g stroke="#f0f0f0" stroke-width="1.6"><line x1="47" y1="5.5" x2="61" y2="5.5"/><line x1="47" y1="11" x2="61" y2="11"/><line x1="47" y1="16.5" x2="61" y2="16.5"/></g></svg>
<div class="a t" style="left:22px;top:1007px;font-size:13.5px;line-height:16px;color:#e0e0e0;">Fill:</div>
<div class="a t" style="left:0px;top:1023.5px;font-size:13.5px;line-height:16px;color:#e0e0e0;">Stroke:</div>
<div class="a t" style="left:75px;top:1007px;font-size:13.5px;line-height:16px;color:#e0e0e0;">N/A</div>
<div class="a t" style="left:75px;top:1023.5px;font-size:13.5px;line-height:16px;color:#e0e0e0;">N/A</div>
<div class="a t" style="left:161px;top:1015px;font-size:13.5px;line-height:16px;color:#e0e0e0;">O:</div>
<div class="a" style="left:180px;top:1007px;width:72px;height:33px;border:1px solid #1f1f1f;border-radius:6px;background:#2f2f2f"></div>
<div class="a" style="left:217px;top:1008px;width:1px;height:31px;background:#292929"></div>
<div class="a" style="left:234px;top:1008px;width:1px;height:31px;background:#292929"></div>
<div class="a t" style="left:188px;top:1015.5px;font-size:13.5px;line-height:16px;color:#8e8e8e;">100</div>
<svg class="a" style="left:180px;top:1007px" width="72" height="33"><g stroke="#5c5c5c" stroke-width="1.6"><line x1="40" y1="16.5" x2="51" y2="16.5"/><line x1="57" y1="16.5" x2="69" y2="16.5"/><line x1="63.0" y1="11.0" x2="63.0" y2="22.0"/></g></svg>
<div class="a" style="left:263px;top:1015px;width:3px;height:16px;background:#3c86f0"></div>
<div class="a t" style="left:272px;top:1015px;font-size:13.5px;line-height:16px;color:#e0e0e0;">#g1-0</div>
<svg class="a" style="left:329.0px;top:1015.0px" width="16" height="16" viewBox="0 0 16 16"><path d="M1.5 9 Q8 2.5 14.5 9 Q8 15.5 1.5 9Z" fill="none" stroke="#eee" stroke-width="1.6"/><circle cx="8" cy="9" r="2.6" fill="#eee"/><path d="M3 5 L1.5 3 M8 3.5 V1.5 M13 5 L14.5 3" stroke="#eee" stroke-width="1.2"/></svg>
<svg class="a" style="left:367px;top:1015px" width="16" height="16"><path d="M1.5 7.5 H10 V15 H1.5Z" fill="#eee"/><path d="M7.8 7.5 V4.5 A2.6 2.6 0 0 1 13 4.5 V6" fill="none" stroke="#eee" stroke-width="1.6"/></svg>
<div class="a" style="left:392px;top:1013px;width:1px;height:20px;background:#2c2c2c"></div>
<div class="a t" style="left:399px;top:1015px;font-size:13.4px;line-height:16px;color:#e0e0e0;">No objects selected. Click, Shift+click, Alt+scroll mouse on top of objects, or drag around objects to select.</div>
<svg class="a" style="left:1406px;top:1015px" width="12" height="16"><path d="M9 2 V14 L2.5 8Z" fill="#8a8a8a"/></svg>
<div class="a" style="left:1430px;top:1007px;width:130px;height:33px;border:1px solid #1f1f1f;border-radius:6px;background:#303030"></div>
<div class="a t" style="left:1442px;top:1015.5px;font-size:11.3px;line-height:16px;color:#e0e0e0;letter-spacing:-0.1px">1. banner_grande</div>
<svg class="a" style="left:1535px;top:1019px" width="14" height="8"><path d="M0.5 0.5 H12.5 L6.5 7Z" fill="#eee"/></svg>
<svg class="a" style="left:1573px;top:1015px" width="12" height="16"><path d="M2.5 2 V14 L9 8Z" fill="#eee"/></svg>
<div class="a" style="left:1596px;top:1011px;width:1px;height:24px;background:#2c2c2c"></div>
<div class="a t" style="left:1603px;top:1006px;font-size:13.5px;line-height:16px;color:#e0e0e0;">X:</div>
<div class="a t" style="left:1603px;top:1022px;font-size:13.5px;line-height:16px;color:#e0e0e0;">Y:</div>
<div class="a t" style="left:1627px;top:1006px;font-size:13.5px;line-height:16px;color:#e0e0e0;">237,50</div>
<div class="a t" style="left:1627px;top:1022px;font-size:13.5px;line-height:16px;color:#e0e0e0;">216,52</div>
<div class="a t" style="left:1682px;top:1015px;font-size:13.5px;line-height:16px;color:#e0e0e0;">Z:</div>
<div class="a" style="left:1697px;top:1006px;width:90px;height:34px;border:1px solid #1f1f1f;border-radius:6px;background:#2f2f2f"></div>
<div class="a" style="left:1753px;top:1007px;width:1px;height:32px;background:#292929"></div>
<div class="a" style="left:1770px;top:1007px;width:1px;height:32px;background:#292929"></div>
<div class="a t" style="left:1707px;top:1015.0px;font-size:13.5px;line-height:16px;color:#e6e6e6;">203%</div>
<svg class="a" style="left:1697px;top:1006px" width="90" height="34"><g stroke="#f0f0f0" stroke-width="1.6"><line x1="59" y1="17.0" x2="70" y2="17.0"/><line x1="76" y1="17.0" x2="87" y2="17.0"/><line x1="81.5" y1="11.5" x2="81.5" y2="22.5"/></g></svg>
<div class="a t" style="left:1797px;top:1015px;font-size:13.5px;line-height:16px;color:#e0e0e0;">R:</div>
<div class="a" style="left:1812px;top:1006px;width:98px;height:34px;border:1px solid #1f1f1f;border-radius:6px;background:#2f2f2f"></div>
<div class="a" style="left:1876px;top:1007px;width:1px;height:32px;background:#292929"></div>
<div class="a" style="left:1894px;top:1007px;width:1px;height:32px;background:#292929"></div>
<div class="a t" style="left:1828px;top:1015.0px;font-size:13.5px;line-height:16px;color:#e6e6e6;">0,00°</div>
<svg class="a" style="left:1812px;top:1006px" width="98" height="34"><g stroke="#f0f0f0" stroke-width="1.6"><line x1="67" y1="17.0" x2="79" y2="17.0"/><line x1="85" y1="17.0" x2="95" y2="17.0"/><line x1="90.0" y1="11.5" x2="90.0" y2="22.5"/></g></svg>
</body></html>
